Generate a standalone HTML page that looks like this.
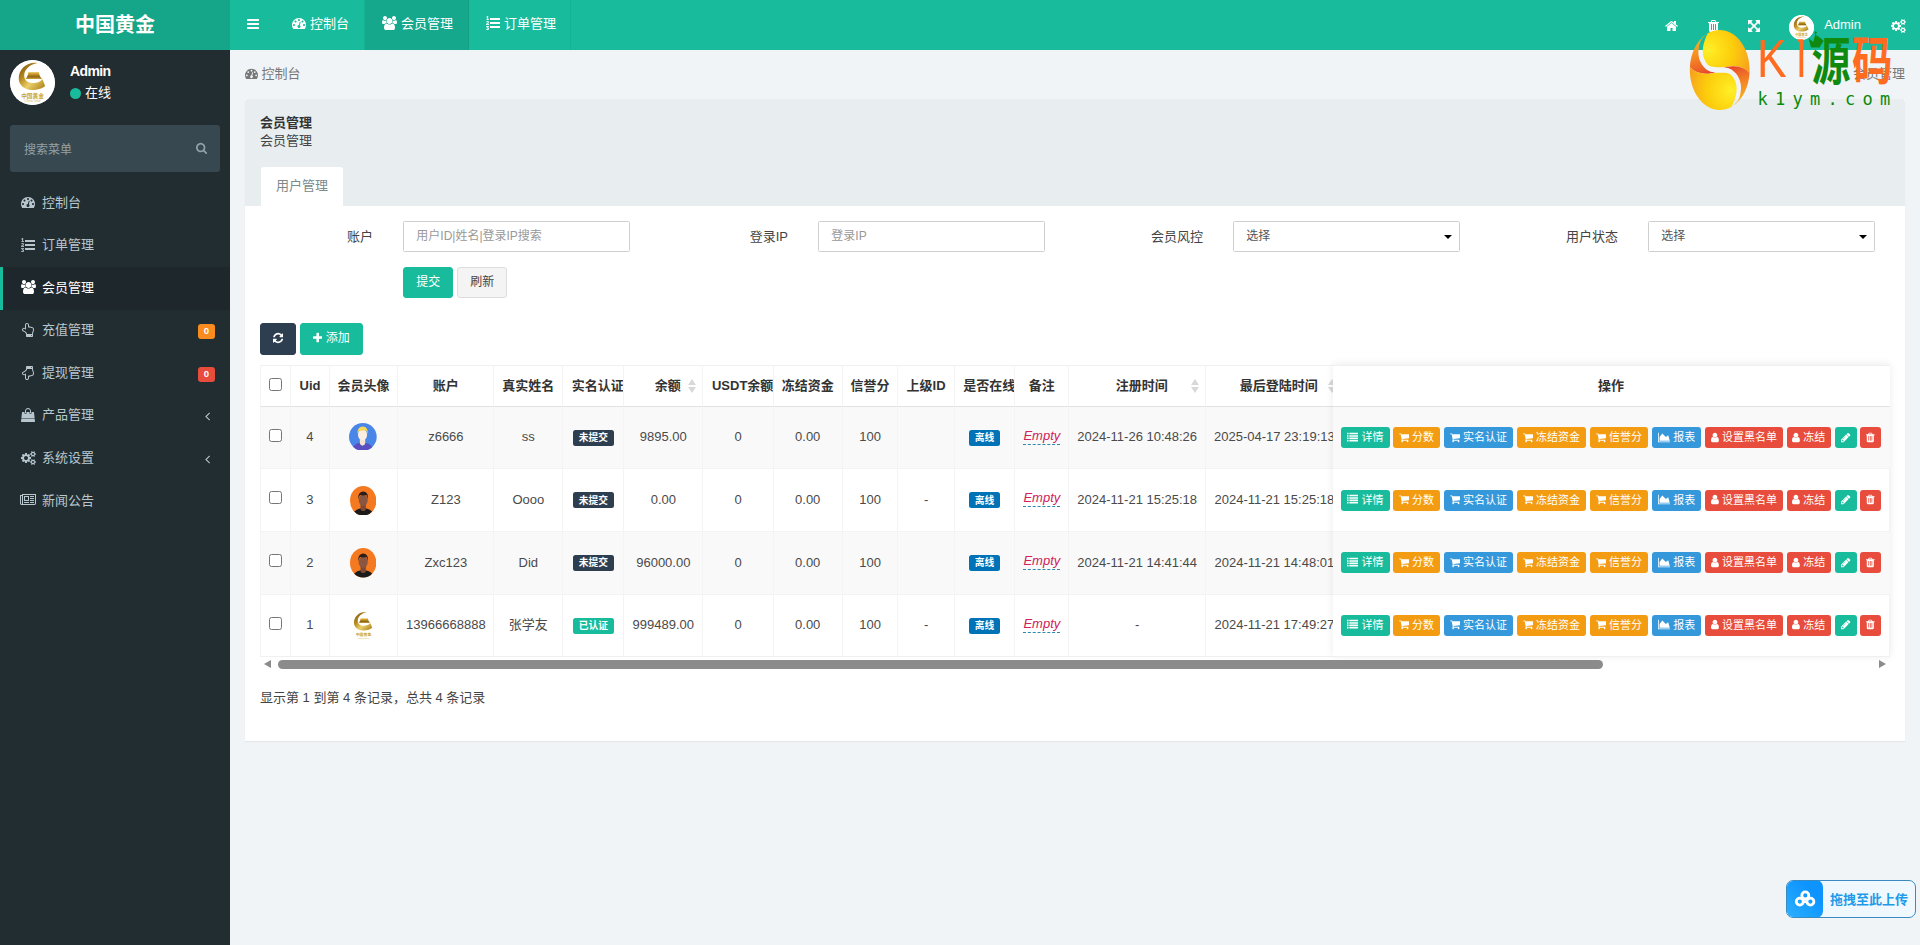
<!DOCTYPE html>
<html lang="zh-CN"><head><meta charset="utf-8"><title>中国黄金</title>
<style>
*{box-sizing:border-box}
html,body{margin:0;padding:0}
body{width:1920px;height:945px;overflow:hidden;background:#f1f4f6;font-family:"Liberation Sans","Noto Sans CJK SC",sans-serif;font-size:13px;line-height:1.42857;color:#444;position:relative}
svg.fa{display:inline-block;vertical-align:-2px}
a{text-decoration:none;color:inherit}
ul{list-style:none;margin:0;padding:0}
.main-header{position:absolute;left:0;top:0;width:1920px;height:50px;background:#18bc9c;z-index:5}
.logo{position:absolute;left:0;top:0;width:230px;height:50px;background:#15a589;color:#fff;font-size:20px;font-weight:bold;line-height:51.5px;text-align:center}
.navbar{position:absolute;left:230px;top:0;right:0;height:50px;color:#fff}
.sidebar-toggle{float:left;height:50px;padding:15px 15px 0 17px;width:45px;line-height:20px}
.nav-tabs{float:left}
.nav-tabs li{float:left;height:50px;padding:0 0 0 16.6px;line-height:48.2px;font-size:13px;border-right:1px solid rgba(0,0,0,.05);white-space:nowrap;overflow:hidden}
.nav-tabs li.active{background:rgba(0,0,0,.1)}
.nav-tabs li svg{margin-right:4.4px}
.custom{float:right}
.custom li{float:left;height:50px;padding:0 15px;line-height:53px}
.custom li.user{font-size:13px;line-height:50px}
.uimg{display:inline-block;width:25px;height:25px;border-radius:50%;background:#fff;vertical-align:middle;margin-right:10px;margin-top:3px;overflow:hidden}
.main-sidebar{position:absolute;left:0;top:50px;width:230px;height:895px;background:#222d32;color:#b8c7ce}
.user-panel{height:65px;padding:10px;position:relative}
.user-panel .img{position:absolute;left:10px;top:10px;width:45px;height:45px;border-radius:50%;background:#fff;overflow:hidden}
.user-panel .info{position:absolute;left:70px;top:10px;color:#fff}
.user-panel .info p{margin:0;font-weight:bold;font-size:14px;line-height:20px;margin-top:1px;letter-spacing:-.6px}
.user-panel .info span{font-size:13px;line-height:18px;display:block;margin-top:3px}
.user-panel .info i{display:inline-block;width:11px;height:11px;border-radius:50%;background:#18bc9c;margin-right:4px;vertical-align:-2px}
.sidebar-form{margin:10px 10px 0;height:46.6px;border-radius:3px;background:#374850;position:relative;color:#93a1a8;font-size:12px;line-height:50px;padding-left:14px}
.sidebar-form svg{position:absolute;right:13px;top:17px}
.sidebar-menu li{height:42.57px;border-left:3px solid transparent;padding:12px 5px 12px 15px;position:relative;font-size:13px;line-height:18.57px;white-space:nowrap}
.sidebar-menu li .tx{position:relative;top:-.7px}
.sidebar-menu li.active{background:#1e282c;border-left-color:#18bc9c;color:#fff}
.sidebar-menu li .ic{display:inline-block;width:20px;text-align:center;margin-right:4px}
.sidebar-menu .badge{position:absolute;right:15px;top:14px;height:15.2px;min-width:17px;padding:0 5px;border-radius:3px;color:#fff;font-size:9.5px;font-weight:bold;line-height:14px;text-align:center}
.sidebar-menu .chev{position:absolute;right:20px;top:13px}
.content{position:absolute;left:230px;top:50px;width:1690px;height:895px;padding:15px}
.bc{height:18.57px;line-height:17.6px;margin-bottom:15px;color:#777;position:relative}
.bc .r{position:absolute;right:0;top:0}
.panel{background:#fff;width:1660px;height:642.3px;box-shadow:0 1px 1px rgba(0,0,0,.05)}
.panel-heading{background:#e8edf0;height:107px;padding:15px;position:relative;border-radius:3px 3px 0 0}
.panel-heading b{display:block;color:#333}
.panel-heading span{display:block;color:#444}
.ptab{position:absolute;left:16px;bottom:0;height:38.57px;padding:10px 15px;background:#fff;color:#7b8a8b;border-radius:3px 3px 0 0}
.panel-body{position:relative;height:535.3px}

.abs{position:absolute}
.flabel{position:absolute;width:113px;text-align:right;font-size:13px;line-height:31px;height:31px;color:#444}
.finput{position:absolute;width:226.7px;height:31px;border:1px solid #cfcfcf;border-radius:1.5px;background:#fff;font-size:12px;line-height:29px;padding:0 12px;color:#999}
.fselect{color:#555}
.fselect i{position:absolute;right:7px;top:13px;width:0;height:0;border-left:4px solid transparent;border-right:4px solid transparent;border-top:4.5px solid #000}
.btn{position:absolute;height:31.4px;border:1px solid transparent;border-radius:3px;font-size:12px;line-height:17.8px;padding:6px 12px;color:#fff;white-space:nowrap}
.btn svg.fa{vertical-align:-1.5px}
.btn-success{background:#18bc9c;border-color:#18bc9c}
.btn-default{background:#f4f4f4;border-color:#ddd;color:#444}
.btn-primary{background:#2c3e50;border-color:#2c3e50}
table{border-collapse:separate;border-spacing:0;table-layout:fixed}
.tw{position:absolute;overflow:hidden}
.tw table{font-size:13px;color:#4a4a4a}
th,td{padding:0;text-align:center;vertical-align:middle;border-left:1px solid #f4f4f4;white-space:nowrap;overflow:hidden}
th{height:41.9px;border-top:1px solid #f0f0f0;border-bottom:1px solid #e2e2e2;color:#333;font-weight:bold;background:#fff;position:relative}
th.ov{text-align:left;padding-left:8.5px}
th.so{padding-left:9px}
td{height:62.63px;border-top:1px solid #f3f3f3}
tbody tr:first-child td{height:61.5px;border-top:0}
tr.odd td{background:#f9f9f9}
.cb{display:inline-block;width:13px;height:13px;border:1px solid #767676;border-radius:2.5px;background:#fff;position:relative;top:.5px}
th .cb{top:1.6px}
.sort{position:absolute;right:6.3px;top:12.6px;width:8px;height:14.5px}
.sort:before,.sort:after{content:"";position:absolute;left:0;border-left:4px solid transparent;border-right:4px solid transparent}
.sort:before{top:0;border-bottom:6.3px solid #d8d8d8}
.sort:after{bottom:0;border-top:6.3px solid #d8d8d8}
.label{display:inline-block;font-size:9.75px;font-weight:bold;color:#fff;line-height:1;padding:3.1px 5.85px 3.1px;border-radius:2.5px;position:relative;top:-.4px}
.l-pri{background:#2c3e50}.l-suc{background:#18bc9c}.l-blue{background:#0073b7}
.empty{font-style:italic;color:#d0215a;border-bottom:1px dashed #2a8aa8;display:inline-block;line-height:16px;position:relative;top:-1.5px}
.fixed{position:absolute;background:#fff;box-shadow:0 -1px 8px rgba(0,0,0,.08)}
.fixed td{text-align:left;padding-left:8px;font-size:0}
.xs{position:absolute;top:50%;margin-top:-10.5px;display:block;height:21px;border-radius:3px;font-size:11px;line-height:17.5px;padding:2px 0;color:#fff;white-space:nowrap;text-align:center}
.fixed td{position:relative}
.xs svg.fa{vertical-align:-1.5px;margin-right:3px}
.xs.io svg.fa{margin-right:0}
.b-g{background:#18bc9c}.b-o{background:#f39c12}.b-b{background:#3498db}.b-r{background:#e74c3c}
.av{display:inline-block;vertical-align:middle}
.sb{position:absolute}
.pinfo{position:absolute;font-size:13px;color:#444;line-height:18.57px}

.upl{position:absolute;left:1786px;top:880px;width:130px;height:38px;border:1px solid #3a8cc0;border-radius:7px;background:#eff8ff;z-index:9;overflow:hidden}
.upi{position:absolute;left:-1px;top:-1px;width:36.700px;height:38px;border-radius:7px;background:linear-gradient(45deg,#2db0ff,#0d94ff 70%)}
.upl span{position:absolute;left:43px;top:0;line-height:37.200px;font-size:13px;font-weight:bold;color:#1e9be8;white-space:nowrap}
</style></head><body>

<div class="main-header">
 <div class="logo">中国黄金</div>
 <div class="navbar">
  <div class="sidebar-toggle"><svg class="fa" width="12.00" height="14" viewBox="0 -1536 1536 1792"><path fill="#fff" transform="scale(1,-1)" d="M1536 192v-128q0 -26 -19 -45t-45 -19h-1408q-26 0 -45 19t-19 45v128q0 26 19 45t45 19h1408q26 0 45 -19t19 -45zM1536 704v-128q0 -26 -19 -45t-45 -19h-1408q-26 0 -45 19t-19 45v128q0 26 19 45t45 19h1408q26 0 45 -19t19 -45zM1536 1216v-128q0 -26 -19 -45
t-45 -19h-1408q-26 0 -45 19t-19 45v128q0 26 19 45t45 19h1408q26 0 45 -19t19 -45z"/></svg></div>
  <ul class="nav-tabs"><li class="" style="width:90px"><svg class="fa" width="14.00" height="14" viewBox="0 -1536 1792 1792"><path fill="#fff" transform="scale(1,-1)" d="M384 384q0 53 -37.5 90.5t-90.5 37.5t-90.5 -37.5t-37.5 -90.5t37.5 -90.5t90.5 -37.5t90.5 37.5t37.5 90.5zM576 832q0 53 -37.5 90.5t-90.5 37.5t-90.5 -37.5t-37.5 -90.5t37.5 -90.5t90.5 -37.5t90.5 37.5t37.5 90.5zM1004 351l101 382q6 26 -7.5 48.5t-38.5 29.5
t-48 -6.5t-30 -39.5l-101 -382q-60 -5 -107 -43.5t-63 -98.5q-20 -77 20 -146t117 -89t146 20t89 117q16 60 -6 117t-72 91zM1664 384q0 53 -37.5 90.5t-90.5 37.5t-90.5 -37.5t-37.5 -90.5t37.5 -90.5t90.5 -37.5t90.5 37.5t37.5 90.5zM1024 1024q0 53 -37.5 90.5
t-90.5 37.5t-90.5 -37.5t-37.5 -90.5t37.5 -90.5t90.5 -37.5t90.5 37.5t37.5 90.5zM1472 832q0 53 -37.5 90.5t-90.5 37.5t-90.5 -37.5t-37.5 -90.5t37.5 -90.5t90.5 -37.5t90.5 37.5t37.5 90.5zM1792 384q0 -261 -141 -483q-19 -29 -54 -29h-1402q-35 0 -54 29
q-141 221 -141 483q0 182 71 348t191 286t286 191t348 71t348 -71t286 -191t191 -286t71 -348z"/></svg>控制台</li><li class="active" style="width:104px"><svg class="fa" width="15.00" height="14" viewBox="0 -1536 1920 1792"><path fill="#fff" transform="scale(1,-1)" d="M593 640q-162 -5 -265 -128h-134q-82 0 -138 40.5t-56 118.5q0 353 124 353q6 0 43.5 -21t97.5 -42.5t119 -21.5q67 0 133 23q-5 -37 -5 -66q0 -139 81 -256zM1664 3q0 -120 -73 -189.5t-194 -69.5h-874q-121 0 -194 69.5t-73 189.5q0 53 3.5 103.5t14 109t26.5 108.5
t43 97.5t62 81t85.5 53.5t111.5 20q10 0 43 -21.5t73 -48t107 -48t135 -21.5t135 21.5t107 48t73 48t43 21.5q61 0 111.5 -20t85.5 -53.5t62 -81t43 -97.5t26.5 -108.5t14 -109t3.5 -103.5zM640 1280q0 -106 -75 -181t-181 -75t-181 75t-75 181t75 181t181 75t181 -75
t75 -181zM1344 896q0 -159 -112.5 -271.5t-271.5 -112.5t-271.5 112.5t-112.5 271.5t112.5 271.5t271.5 112.5t271.5 -112.5t112.5 -271.5zM1920 671q0 -78 -56 -118.5t-138 -40.5h-134q-103 123 -265 128q81 117 81 256q0 29 -5 66q66 -23 133 -23q59 0 119 21.5t97.5 42.5
t43.5 21q124 0 124 -353zM1792 1280q0 -106 -75 -181t-181 -75t-181 75t-75 181t75 181t181 75t181 -75t75 -181z"/></svg>会员管理</li><li class="" style="width:102.25px"><svg class="fa" width="14.00" height="14" viewBox="0 -1536 1792 1792"><path fill="#fff" transform="scale(1,-1)" d="M381 -84q0 -80 -54.5 -126t-135.5 -46q-106 0 -172 66l57 88q49 -45 106 -45q29 0 50.5 14.5t21.5 42.5q0 64 -105 56l-26 56q8 10 32.5 43.5t42.5 54t37 38.5v1q-16 0 -48.5 -1t-48.5 -1v-53h-106v152h333v-88l-95 -115q51 -12 81 -49t30 -88zM383 543v-159h-362
q-6 36 -6 54q0 51 23.5 93t56.5 68t66 47.5t56.5 43.5t23.5 45q0 25 -14.5 38.5t-39.5 13.5q-46 0 -81 -58l-85 59q24 51 71.5 79.5t105.5 28.5q73 0 123 -41.5t50 -112.5q0 -50 -34 -91.5t-75 -64.5t-75.5 -50.5t-35.5 -52.5h127v60h105zM1792 224v-192q0 -13 -9.5 -22.5
t-22.5 -9.5h-1216q-13 0 -22.5 9.5t-9.5 22.5v192q0 14 9 23t23 9h1216q13 0 22.5 -9.5t9.5 -22.5zM384 1123v-99h-335v99h107q0 41 0.5 121.5t0.5 121.5v12h-2q-8 -17 -50 -54l-71 76l136 127h106v-404h108zM1792 736v-192q0 -13 -9.5 -22.5t-22.5 -9.5h-1216
q-13 0 -22.5 9.5t-9.5 22.5v192q0 14 9 23t23 9h1216q13 0 22.5 -9.5t9.5 -22.5zM1792 1248v-192q0 -13 -9.5 -22.5t-22.5 -9.5h-1216q-13 0 -22.5 9.5t-9.5 22.5v192q0 13 9.5 22.5t22.5 9.5h1216q13 0 22.5 -9.5t9.5 -22.5z"/></svg>订单管理</li></ul>
  <ul class="custom">
   <li><svg class="fa" width="13.00" height="14" viewBox="0 -1536 1664 1792"><path fill="#fff" transform="scale(1,-1)" d="M1408 544v-480q0 -26 -19 -45t-45 -19h-384v384h-256v-384h-384q-26 0 -45 19t-19 45v480q0 1 0.5 3t0.5 3l575 474l575 -474q1 -2 1 -6zM1631 613l-62 -74q-8 -9 -21 -11h-3q-13 0 -21 7l-692 577l-692 -577q-12 -8 -24 -7q-13 2 -21 11l-62 74q-8 10 -7 23.5t11 21.5
l719 599q32 26 76 26t76 -26l244 -204v195q0 14 9 23t23 9h192q14 0 23 -9t9 -23v-408l219 -182q10 -8 11 -21.5t-7 -23.5z"/></svg></li><li style="padding-right:14px"><svg class="fa" width="11.00" height="14" viewBox="0 -1536 1408 1792"><path fill="#fff" transform="scale(1,-1)" d="M512 160v704q0 14 -9 23t-23 9h-64q-14 0 -23 -9t-9 -23v-704q0 -14 9 -23t23 -9h64q14 0 23 9t9 23zM768 160v704q0 14 -9 23t-23 9h-64q-14 0 -23 -9t-9 -23v-704q0 -14 9 -23t23 -9h64q14 0 23 9t9 23zM1024 160v704q0 14 -9 23t-23 9h-64q-14 0 -23 -9t-9 -23v-704
q0 -14 9 -23t23 -9h64q14 0 23 9t9 23zM480 1152h448l-48 117q-7 9 -17 11h-317q-10 -2 -17 -11zM1408 1120v-64q0 -14 -9 -23t-23 -9h-96v-948q0 -83 -47 -143.5t-113 -60.5h-832q-66 0 -113 58.5t-47 141.5v952h-96q-14 0 -23 9t-9 23v64q0 14 9 23t23 9h309l70 167
q15 37 54 63t79 26h320q40 0 79 -26t54 -63l70 -167h309q14 0 23 -9t9 -23z"/></svg></li><li style="padding-right:14px"><svg class="fa" width="12.00" height="14" viewBox="0 -1536 1536 1792"><path fill="#fff" transform="scale(1,-1)" d="M1283 995l-355 -355l355 -355l144 144q29 31 70 14q39 -17 39 -59v-448q0 -26 -19 -45t-45 -19h-448q-42 0 -59 40q-17 39 14 69l144 144l-355 355l-355 -355l144 -144q31 -30 14 -69q-17 -40 -59 -40h-448q-26 0 -45 19t-19 45v448q0 42 40 59q39 17 69 -14l144 -144
l355 355l-355 355l-144 -144q-19 -19 -45 -19q-12 0 -24 5q-40 17 -40 59v448q0 26 19 45t45 19h448q42 0 59 -40q17 -39 -14 -69l-144 -144l355 -355l355 355l-144 144q-31 30 -14 69q17 40 59 40h448q26 0 45 -19t19 -45v-448q0 -42 -39 -59q-13 -5 -25 -5q-26 0 -45 19z
"/></svg></li>
   <li class="user"><span class="uimg"><svg class="lg" width="25" height="25" viewBox="0 0 45 45" style="display:block">
<defs><linearGradient id="gha" x1="0" y1="0" x2="1" y2="1"><stop offset="0" stop-color="#6e4c12"/><stop offset=".35" stop-color="#b98a1e"/><stop offset=".6" stop-color="#e9cf6a"/><stop offset="1" stop-color="#a87812"/></linearGradient>
<linearGradient id="ghb" x1="0" y1="0" x2="0" y2="1"><stop offset="0" stop-color="#f0d676"/><stop offset=".3" stop-color="#c99a2a"/><stop offset=".7" stop-color="#8f6614"/><stop offset="1" stop-color="#caa23a"/></linearGradient></defs>
<circle cx="22.5" cy="22.5" r="22.5" fill="#fff"/><path d="M27.6 2.9C17 1.500 8.700 9 8.700 18.300c0 7.200 5.800 11.600 13.100 11.600 6.200 0 11.200-1.900 13.400-4l-2.900-7c-1.300 2.600-5.300 4-9.800 4-5 0-8.300-2.900-8.300-7.400 0-6 5.300-11 13.400-12.600z" fill="url(#gha)"/>
<path d="M18.300 11.900h10.500c.5 3.100 1.700 5.600 3.500 7H15.400c1.600-1.400 2.600-3.900 2.900-7z" fill="url(#ghb)"/>
<text x="22.500" y="37.800" text-anchor="middle" font-family="'Liberation Sans','Noto Sans CJK SC',sans-serif" font-weight="bold" font-size="5.700" fill="#c9a42c">中国黄金</text>
<text x="22.500" y="41.900" text-anchor="middle" font-family="'Liberation Sans',sans-serif" font-size="3.200" fill="#d6b95a">China Gold</text></svg></span>Admin</li>
   <li style="padding-right:14px"><svg class="fa" width="15.00" height="14" viewBox="0 -1536 1920 1792"><path fill="#fff" transform="scale(1,-1)" d="M896 640q0 106 -75 181t-181 75t-181 -75t-75 -181t75 -181t181 -75t181 75t75 181zM1664 128q0 52 -38 90t-90 38t-90 -38t-38 -90q0 -53 37.5 -90.5t90.5 -37.5t90.5 37.5t37.5 90.5zM1664 1152q0 52 -38 90t-90 38t-90 -38t-38 -90q0 -53 37.5 -90.5t90.5 -37.5
t90.5 37.5t37.5 90.5zM1280 731v-185q0 -10 -7 -19.5t-16 -10.5l-155 -24q-11 -35 -32 -76q34 -48 90 -115q7 -11 7 -20q0 -12 -7 -19q-23 -30 -82.5 -89.5t-78.5 -59.5q-11 0 -21 7l-115 90q-37 -19 -77 -31q-11 -108 -23 -155q-7 -24 -30 -24h-186q-11 0 -20 7.5t-10 17.5
l-23 153q-34 10 -75 31l-118 -89q-7 -7 -20 -7q-11 0 -21 8q-144 133 -144 160q0 9 7 19q10 14 41 53t47 61q-23 44 -35 82l-152 24q-10 1 -17 9.5t-7 19.5v185q0 10 7 19.5t16 10.5l155 24q11 35 32 76q-34 48 -90 115q-7 11 -7 20q0 12 7 20q22 30 82 89t79 59q11 0 21 -7
l115 -90q34 18 77 32q11 108 23 154q7 24 30 24h186q11 0 20 -7.5t10 -17.5l23 -153q34 -10 75 -31l118 89q8 7 20 7q11 0 21 -8q144 -133 144 -160q0 -8 -7 -19q-12 -16 -42 -54t-45 -60q23 -48 34 -82l152 -23q10 -2 17 -10.5t7 -19.5zM1920 198v-140q0 -16 -149 -31
q-12 -27 -30 -52q51 -113 51 -138q0 -4 -4 -7q-122 -71 -124 -71q-8 0 -46 47t-52 68q-20 -2 -30 -2t-30 2q-14 -21 -52 -68t-46 -47q-2 0 -124 71q-4 3 -4 7q0 25 51 138q-18 25 -30 52q-149 15 -149 31v140q0 16 149 31q13 29 30 52q-51 113 -51 138q0 4 4 7q4 2 35 20
t59 34t30 16q8 0 46 -46.5t52 -67.5q20 2 30 2t30 -2q51 71 92 112l6 2q4 0 124 -70q4 -3 4 -7q0 -25 -51 -138q17 -23 30 -52q149 -15 149 -31zM1920 1222v-140q0 -16 -149 -31q-12 -27 -30 -52q51 -113 51 -138q0 -4 -4 -7q-122 -71 -124 -71q-8 0 -46 47t-52 68
q-20 -2 -30 -2t-30 2q-14 -21 -52 -68t-46 -47q-2 0 -124 71q-4 3 -4 7q0 25 51 138q-18 25 -30 52q-149 15 -149 31v140q0 16 149 31q13 29 30 52q-51 113 -51 138q0 4 4 7q4 2 35 20t59 34t30 16q8 0 46 -46.5t52 -67.5q20 2 30 2t30 -2q51 71 92 112l6 2q4 0 124 -70
q4 -3 4 -7q0 -25 -51 -138q17 -23 30 -52q149 -15 149 -31z"/></svg></li>
  </ul>
 </div>
</div>

<div class="main-sidebar">
 <div class="user-panel"><div class="img"><svg class="lg" width="45" height="45" viewBox="0 0 45 45" style="display:block">
<defs><linearGradient id="gsa" x1="0" y1="0" x2="1" y2="1"><stop offset="0" stop-color="#6e4c12"/><stop offset=".35" stop-color="#b98a1e"/><stop offset=".6" stop-color="#e9cf6a"/><stop offset="1" stop-color="#a87812"/></linearGradient>
<linearGradient id="gsb" x1="0" y1="0" x2="0" y2="1"><stop offset="0" stop-color="#f0d676"/><stop offset=".3" stop-color="#c99a2a"/><stop offset=".7" stop-color="#8f6614"/><stop offset="1" stop-color="#caa23a"/></linearGradient></defs>
<circle cx="22.5" cy="22.5" r="22.5" fill="#fff"/><path d="M27.6 2.9C17 1.500 8.700 9 8.700 18.300c0 7.200 5.800 11.600 13.100 11.600 6.200 0 11.200-1.900 13.400-4l-2.900-7c-1.300 2.600-5.300 4-9.800 4-5 0-8.300-2.900-8.300-7.400 0-6 5.300-11 13.400-12.600z" fill="url(#gsa)"/>
<path d="M18.300 11.900h10.500c.5 3.100 1.700 5.600 3.500 7H15.400c1.600-1.400 2.600-3.900 2.900-7z" fill="url(#gsb)"/>
<text x="22.500" y="37.800" text-anchor="middle" font-family="'Liberation Sans','Noto Sans CJK SC',sans-serif" font-weight="bold" font-size="5.700" fill="#c9a42c">中国黄金</text>
<text x="22.500" y="41.900" text-anchor="middle" font-family="'Liberation Sans',sans-serif" font-size="3.200" fill="#d6b95a">China Gold</text></svg></div><div class="info"><p>Admin</p><span><i></i>在线</span></div></div>
 <div class="sidebar-form">搜索菜单<svg class="fa" width="11.14" height="12" viewBox="0 -1536 1664 1792"><path fill="#93a1a8" transform="scale(1,-1)" d="M1152 704q0 185 -131.5 316.5t-316.5 131.5t-316.5 -131.5t-131.5 -316.5t131.5 -316.5t316.5 -131.5t316.5 131.5t131.5 316.5zM1664 -128q0 -52 -38 -90t-90 -38q-54 0 -90 38l-343 342q-179 -124 -399 -124q-143 0 -273.5 55.5t-225 150t-150 225t-55.5 273.5
t55.5 273.5t150 225t225 150t273.5 55.5t273.5 -55.5t225 -150t150 -225t55.5 -273.5q0 -220 -124 -399l343 -343q37 -37 37 -90z"/></svg></div>
 <ul class="sidebar-menu" style="margin-top:10.7px">
 <li class=""><span class="ic"><svg class="fa" width="14.00" height="14" viewBox="0 -1536 1792 1792"><path fill="#b8c7ce" transform="scale(1,-1)" d="M384 384q0 53 -37.5 90.5t-90.5 37.5t-90.5 -37.5t-37.5 -90.5t37.5 -90.5t90.5 -37.5t90.5 37.5t37.5 90.5zM576 832q0 53 -37.5 90.5t-90.5 37.5t-90.5 -37.5t-37.5 -90.5t37.5 -90.5t90.5 -37.5t90.5 37.5t37.5 90.5zM1004 351l101 382q6 26 -7.5 48.5t-38.5 29.5
t-48 -6.5t-30 -39.5l-101 -382q-60 -5 -107 -43.5t-63 -98.5q-20 -77 20 -146t117 -89t146 20t89 117q16 60 -6 117t-72 91zM1664 384q0 53 -37.5 90.5t-90.5 37.5t-90.5 -37.5t-37.5 -90.5t37.5 -90.5t90.5 -37.5t90.5 37.5t37.5 90.5zM1024 1024q0 53 -37.5 90.5
t-90.5 37.5t-90.5 -37.5t-37.5 -90.5t37.5 -90.5t90.5 -37.5t90.5 37.5t37.5 90.5zM1472 832q0 53 -37.5 90.5t-90.5 37.5t-90.5 -37.5t-37.5 -90.5t37.5 -90.5t90.5 -37.5t90.5 37.5t37.5 90.5zM1792 384q0 -261 -141 -483q-19 -29 -54 -29h-1402q-35 0 -54 29
q-141 221 -141 483q0 182 71 348t191 286t286 191t348 71t348 -71t286 -191t191 -286t71 -348z"/></svg></span><span class="tx">控制台</span></li>
 <li class=""><span class="ic"><svg class="fa" width="14.00" height="14" viewBox="0 -1536 1792 1792"><path fill="#b8c7ce" transform="scale(1,-1)" d="M381 -84q0 -80 -54.5 -126t-135.5 -46q-106 0 -172 66l57 88q49 -45 106 -45q29 0 50.5 14.5t21.5 42.5q0 64 -105 56l-26 56q8 10 32.5 43.5t42.5 54t37 38.5v1q-16 0 -48.5 -1t-48.5 -1v-53h-106v152h333v-88l-95 -115q51 -12 81 -49t30 -88zM383 543v-159h-362
q-6 36 -6 54q0 51 23.5 93t56.5 68t66 47.5t56.5 43.5t23.5 45q0 25 -14.5 38.5t-39.5 13.5q-46 0 -81 -58l-85 59q24 51 71.5 79.5t105.5 28.5q73 0 123 -41.5t50 -112.5q0 -50 -34 -91.5t-75 -64.5t-75.5 -50.5t-35.5 -52.5h127v60h105zM1792 224v-192q0 -13 -9.5 -22.5
t-22.5 -9.5h-1216q-13 0 -22.5 9.5t-9.5 22.5v192q0 14 9 23t23 9h1216q13 0 22.5 -9.5t9.5 -22.5zM384 1123v-99h-335v99h107q0 41 0.5 121.5t0.5 121.5v12h-2q-8 -17 -50 -54l-71 76l136 127h106v-404h108zM1792 736v-192q0 -13 -9.5 -22.5t-22.5 -9.5h-1216
q-13 0 -22.5 9.5t-9.5 22.5v192q0 14 9 23t23 9h1216q13 0 22.5 -9.5t9.5 -22.5zM1792 1248v-192q0 -13 -9.5 -22.5t-22.5 -9.5h-1216q-13 0 -22.5 9.5t-9.5 22.5v192q0 13 9.5 22.5t22.5 9.5h1216q13 0 22.5 -9.5t9.5 -22.5z"/></svg></span><span class="tx">订单管理</span></li>
 <li class="active"><span class="ic"><svg class="fa" width="15.00" height="14" viewBox="0 -1536 1920 1792"><path fill="#fff" transform="scale(1,-1)" d="M593 640q-162 -5 -265 -128h-134q-82 0 -138 40.5t-56 118.5q0 353 124 353q6 0 43.5 -21t97.5 -42.5t119 -21.5q67 0 133 23q-5 -37 -5 -66q0 -139 81 -256zM1664 3q0 -120 -73 -189.5t-194 -69.5h-874q-121 0 -194 69.5t-73 189.5q0 53 3.5 103.5t14 109t26.5 108.5
t43 97.5t62 81t85.5 53.5t111.5 20q10 0 43 -21.5t73 -48t107 -48t135 -21.5t135 21.5t107 48t73 48t43 21.5q61 0 111.5 -20t85.5 -53.5t62 -81t43 -97.5t26.5 -108.5t14 -109t3.5 -103.5zM640 1280q0 -106 -75 -181t-181 -75t-181 75t-75 181t75 181t181 75t181 -75
t75 -181zM1344 896q0 -159 -112.5 -271.5t-271.5 -112.5t-271.5 112.5t-112.5 271.5t112.5 271.5t271.5 112.5t271.5 -112.5t112.5 -271.5zM1920 671q0 -78 -56 -118.5t-138 -40.5h-134q-103 123 -265 128q81 117 81 256q0 29 -5 66q66 -23 133 -23q59 0 119 21.5t97.5 42.5
t43.5 21q124 0 124 -353zM1792 1280q0 -106 -75 -181t-181 -75t-181 75t-75 181t75 181t181 75t181 -75t75 -181z"/></svg></span><span class="tx">会员管理</span></li>
 <li class=""><span class="ic"><svg class="fa" width="12.00" height="14" viewBox="0 -1536 1536 1792"><path fill="#b8c7ce" transform="scale(1,-1)" d="M1280 -64q0 26 -19 45t-45 19t-45 -19t-19 -45t19 -45t45 -19t45 19t19 45zM1408 700q0 189 -167 189q-26 0 -56 -5q-16 30 -52.5 47.5t-73.5 17.5t-69 -18q-50 53 -119 53q-25 0 -55.5 -10t-47.5 -25v331q0 52 -38 90t-90 38q-51 0 -89.5 -39t-38.5 -89v-576
q-20 0 -48.5 15t-55 33t-68 33t-84.5 15q-67 0 -97.5 -44.5t-30.5 -115.5q0 -24 139 -90q44 -24 65 -37q64 -40 145 -112q81 -71 106 -101q57 -69 57 -140v-32h640v32q0 72 32 167t64 193.5t32 179.5zM1536 705q0 -133 -69 -322q-59 -164 -59 -223v-288q0 -53 -37.5 -90.5
t-90.5 -37.5h-640q-53 0 -90.5 37.5t-37.5 90.5v288q0 10 -4.5 21.5t-14 23.5t-18 22.5t-22.5 24t-21.5 20.5t-21.5 19t-17 14q-74 65 -129 100q-21 13 -62 33t-72 37t-63 40.5t-49.5 55t-17.5 69.5q0 125 67 206.5t189 81.5q68 0 128 -22v374q0 104 76 180t179 76
q105 0 181 -75.5t76 -180.5v-169q62 -4 119 -37q21 3 43 3q101 0 178 -60q139 1 219.5 -85t80.5 -227z"/></svg></span><span class="tx">充值管理</span><span class="badge" style="background:#fa8b1e">0</span></li>
 <li class=""><span class="ic"><svg class="fa" width="12.00" height="14" viewBox="0 -1536 1536 1792"><path fill="#b8c7ce" transform="scale(1,-1)" d="M1408 576q0 84 -32 183t-64 194t-32 167v32h-640v-32q0 -35 -12 -67.5t-37 -62.5t-46 -50t-54 -49q-9 -8 -14 -12q-81 -72 -145 -112q-22 -14 -68 -38q-3 -1 -22.5 -10.5t-36 -18.5t-35.5 -20t-30.5 -21.5t-11.5 -18.5q0 -71 30.5 -115.5t97.5 -44.5q43 0 84.5 15t68 33
t55 33t48.5 15v-576q0 -50 38.5 -89t89.5 -39q52 0 90 38t38 90v331q46 -35 103 -35q69 0 119 53q32 -18 69 -18t73.5 17.5t52.5 47.5q24 -4 56 -4q85 0 126 48.5t41 135.5zM1280 1344q0 26 -19 45t-45 19t-45 -19t-19 -45t19 -45t45 -19t45 19t19 45zM1536 580
q0 -142 -77.5 -230t-217.5 -87l-5 1q-76 -61 -178 -61q-22 0 -43 3q-54 -30 -119 -37v-169q0 -105 -76 -180.5t-181 -75.5q-103 0 -179 76t-76 180v374q-54 -22 -128 -22q-121 0 -188.5 81.5t-67.5 206.5q0 38 17.5 69.5t49.5 55t63 40.5t72 37t62 33q55 35 129 100
q3 2 17 14t21.5 19t21.5 20.5t22.5 24t18 22.5t14 23.5t4.5 21.5v288q0 53 37.5 90.5t90.5 37.5h640q53 0 90.5 -37.5t37.5 -90.5v-288q0 -59 59 -223q69 -190 69 -317z"/></svg></span><span class="tx">提现管理</span><span class="badge" style="background:#e74c3c">0</span></li>
 <li class=""><span class="ic"><svg class="fa" width="14.00" height="14" viewBox="0 -1536 1792 1792"><path fill="#b8c7ce" transform="scale(1,-1)" d="M1757 128l35 -313q3 -28 -16 -50q-19 -21 -48 -21h-1664q-29 0 -48 21q-19 22 -16 50l35 313h1722zM1664 967l86 -775h-1708l86 775q3 24 21 40.5t43 16.5h256v-128q0 -53 37.5 -90.5t90.5 -37.5t90.5 37.5t37.5 90.5v128h384v-128q0 -53 37.5 -90.5t90.5 -37.5
t90.5 37.5t37.5 90.5v128h256q25 0 43 -16.5t21 -40.5zM1280 1152v-256q0 -26 -19 -45t-45 -19t-45 19t-19 45v256q0 106 -75 181t-181 75t-181 -75t-75 -181v-256q0 -26 -19 -45t-45 -19t-45 19t-19 45v256q0 159 112.5 271.5t271.5 112.5t271.5 -112.5t112.5 -271.5z"/></svg></span><span class="tx">产品管理</span><span class="chev"><svg class="fa" width="5.00" height="14" viewBox="0 -1536 640 1792"><path fill="#b8c7ce" transform="scale(1,-1)" d="M627 992q0 -13 -10 -23l-393 -393l393 -393q10 -10 10 -23t-10 -23l-50 -50q-10 -10 -23 -10t-23 10l-466 466q-10 10 -10 23t10 23l466 466q10 10 23 10t23 -10l50 -50q10 -10 10 -23z"/></svg></span></li>
 <li class=""><span class="ic"><svg class="fa" width="15.00" height="14" viewBox="0 -1536 1920 1792"><path fill="#b8c7ce" transform="scale(1,-1)" d="M896 640q0 106 -75 181t-181 75t-181 -75t-75 -181t75 -181t181 -75t181 75t75 181zM1664 128q0 52 -38 90t-90 38t-90 -38t-38 -90q0 -53 37.5 -90.5t90.5 -37.5t90.5 37.5t37.5 90.5zM1664 1152q0 52 -38 90t-90 38t-90 -38t-38 -90q0 -53 37.5 -90.5t90.5 -37.5
t90.5 37.5t37.5 90.5zM1280 731v-185q0 -10 -7 -19.5t-16 -10.5l-155 -24q-11 -35 -32 -76q34 -48 90 -115q7 -11 7 -20q0 -12 -7 -19q-23 -30 -82.5 -89.5t-78.5 -59.5q-11 0 -21 7l-115 90q-37 -19 -77 -31q-11 -108 -23 -155q-7 -24 -30 -24h-186q-11 0 -20 7.5t-10 17.5
l-23 153q-34 10 -75 31l-118 -89q-7 -7 -20 -7q-11 0 -21 8q-144 133 -144 160q0 9 7 19q10 14 41 53t47 61q-23 44 -35 82l-152 24q-10 1 -17 9.5t-7 19.5v185q0 10 7 19.5t16 10.5l155 24q11 35 32 76q-34 48 -90 115q-7 11 -7 20q0 12 7 20q22 30 82 89t79 59q11 0 21 -7
l115 -90q34 18 77 32q11 108 23 154q7 24 30 24h186q11 0 20 -7.5t10 -17.5l23 -153q34 -10 75 -31l118 89q8 7 20 7q11 0 21 -8q144 -133 144 -160q0 -8 -7 -19q-12 -16 -42 -54t-45 -60q23 -48 34 -82l152 -23q10 -2 17 -10.5t7 -19.5zM1920 198v-140q0 -16 -149 -31
q-12 -27 -30 -52q51 -113 51 -138q0 -4 -4 -7q-122 -71 -124 -71q-8 0 -46 47t-52 68q-20 -2 -30 -2t-30 2q-14 -21 -52 -68t-46 -47q-2 0 -124 71q-4 3 -4 7q0 25 51 138q-18 25 -30 52q-149 15 -149 31v140q0 16 149 31q13 29 30 52q-51 113 -51 138q0 4 4 7q4 2 35 20
t59 34t30 16q8 0 46 -46.5t52 -67.5q20 2 30 2t30 -2q51 71 92 112l6 2q4 0 124 -70q4 -3 4 -7q0 -25 -51 -138q17 -23 30 -52q149 -15 149 -31zM1920 1222v-140q0 -16 -149 -31q-12 -27 -30 -52q51 -113 51 -138q0 -4 -4 -7q-122 -71 -124 -71q-8 0 -46 47t-52 68
q-20 -2 -30 -2t-30 2q-14 -21 -52 -68t-46 -47q-2 0 -124 71q-4 3 -4 7q0 25 51 138q-18 25 -30 52q-149 15 -149 31v140q0 16 149 31q13 29 30 52q-51 113 -51 138q0 4 4 7q4 2 35 20t59 34t30 16q8 0 46 -46.5t52 -67.5q20 2 30 2t30 -2q51 71 92 112l6 2q4 0 124 -70
q4 -3 4 -7q0 -25 -51 -138q17 -23 30 -52q149 -15 149 -31z"/></svg></span><span class="tx">系统设置</span><span class="chev"><svg class="fa" width="5.00" height="14" viewBox="0 -1536 640 1792"><path fill="#b8c7ce" transform="scale(1,-1)" d="M627 992q0 -13 -10 -23l-393 -393l393 -393q10 -10 10 -23t-10 -23l-50 -50q-10 -10 -23 -10t-23 10l-466 466q-10 10 -10 23t10 23l466 466q10 10 23 10t23 -10l50 -50q10 -10 10 -23z"/></svg></span></li>
 <li class=""><span class="ic"><svg class="fa" width="16.00" height="14" viewBox="0 -1536 2048 1792"><path fill="#b8c7ce" transform="scale(1,-1)" d="M1024 1024h-384v-384h384v384zM1152 384v-128h-640v128h640zM1152 1152v-640h-640v640h640zM1792 384v-128h-512v128h512zM1792 640v-128h-512v128h512zM1792 896v-128h-512v128h512zM1792 1152v-128h-512v128h512zM256 192v960h-128v-960q0 -26 19 -45t45 -19t45 19
t19 45zM1920 192v1088h-1536v-1088q0 -33 -11 -64h1483q26 0 45 19t19 45zM2048 1408v-1216q0 -80 -56 -136t-136 -56h-1664q-80 0 -136 56t-56 136v1088h256v128h1792z"/></svg></span><span class="tx">新闻公告</span></li>
 </ul>
</div>

<div class="content">
 <div class="bc"><svg class="fa" width="13.00" height="13" viewBox="0 -1536 1792 1792"><path fill="#777" transform="scale(1,-1)" d="M384 384q0 53 -37.5 90.5t-90.5 37.5t-90.5 -37.5t-37.5 -90.5t37.5 -90.5t90.5 -37.5t90.5 37.5t37.5 90.5zM576 832q0 53 -37.5 90.5t-90.5 37.5t-90.5 -37.5t-37.5 -90.5t37.5 -90.5t90.5 -37.5t90.5 37.5t37.5 90.5zM1004 351l101 382q6 26 -7.5 48.5t-38.5 29.5
t-48 -6.5t-30 -39.5l-101 -382q-60 -5 -107 -43.5t-63 -98.5q-20 -77 20 -146t117 -89t146 20t89 117q16 60 -6 117t-72 91zM1664 384q0 53 -37.5 90.5t-90.5 37.5t-90.5 -37.5t-37.5 -90.5t37.5 -90.5t90.5 -37.5t90.5 37.5t37.5 90.5zM1024 1024q0 53 -37.5 90.5
t-90.5 37.5t-90.5 -37.5t-37.5 -90.5t37.5 -90.5t90.5 -37.5t90.5 37.5t37.5 90.5zM1472 832q0 53 -37.5 90.5t-90.5 37.5t-90.5 -37.5t-37.5 -90.5t37.5 -90.5t90.5 -37.5t90.5 37.5t37.5 90.5zM1792 384q0 -261 -141 -483q-19 -29 -54 -29h-1402q-35 0 -54 29
q-141 221 -141 483q0 182 71 348t191 286t286 191t348 71t348 -71t286 -191t191 -286t71 -348z"/></svg> 控制台<span class="r">会员管理</span></div>
 <div class="panel">
  <div class="panel-heading"><b>会员管理</b><span>会员管理</span><div class="ptab">用户管理</div></div>
  <div class="panel-body"><label class="flabel" style="left:15.00px;top:15.00px">账户</label><div class="finput" style="left:158.30px;top:15.00px">用户ID|姓名|登录IP搜索</div><label class="flabel" style="left:430.00px;top:15.00px">登录IP</label><div class="finput" style="left:573.30px;top:15.00px">登录IP</div><label class="flabel" style="left:845.00px;top:15.00px">会员风控</label><div class="finput fselect" style="left:988.30px;top:15.00px">选择<i></i></div><label class="flabel" style="left:1260.00px;top:15.00px">用户状态</label><div class="finput fselect" style="left:1403.30px;top:15.00px">选择<i></i></div><div class="btn btn-success" style="left:158.30px;top:61.13px">提交</div><div class="btn btn-default" style="left:212.30px;top:61.13px">刷新</div><div class="btn btn-primary" style="left:15.25px;top:117.63px;padding-left:11.6px;padding-right:11.6px"><svg class="fa" width="10.29" height="12" viewBox="0 -1536 1536 1792"><path fill="#fff" transform="scale(1,-1)" d="M1511 480q0 -5 -1 -7q-64 -268 -268 -434.5t-478 -166.5q-146 0 -282.5 55t-243.5 157l-129 -129q-19 -19 -45 -19t-45 19t-19 45v448q0 26 19 45t45 19h448q26 0 45 -19t19 -45t-19 -45l-137 -137q71 -66 161 -102t187 -36q134 0 250 65t186 179q11 17 53 117
q8 23 30 23h192q13 0 22.5 -9.5t9.5 -22.5zM1536 1280v-448q0 -26 -19 -45t-45 -19h-448q-26 0 -45 19t-19 45t19 45l138 138q-148 137 -349 137q-134 0 -250 -65t-186 -179q-11 -17 -53 -117q-8 -23 -30 -23h-199q-13 0 -22.5 9.5t-9.5 22.5v7q65 268 270 434.5t480 166.5
q146 0 284 -55.5t245 -156.5l130 129q19 19 45 19t45 -19t19 -45z"/></svg></div><div class="btn btn-success" style="left:55.00px;top:117.63px"><svg class="fa" width="9.43" height="12" viewBox="0 -1536 1408 1792"><path fill="#fff" transform="scale(1,-1)" d="M1408 800v-192q0 -40 -28 -68t-68 -28h-416v-416q0 -40 -28 -68t-68 -28h-192q-40 0 -68 28t-28 68v416h-416q-40 0 -68 28t-28 68v192q0 40 28 68t68 28h416v416q0 40 28 68t68 28h192q40 0 68 -28t28 -68v-416h416q40 0 68 -28t28 -68z"/></svg> 添加</div><div class="tw" style="left:15.25px;top:159.43px;width:1072.25px;height:292.3px;border-bottom:1px solid #f0f0f0"><table style="width:1082.25px"><colgroup><col style="width:30.15px"><col style="width:38.20px"><col style="width:68.90px"><col style="width:95.80px"><col style="width:69.10px"><col style="width:60.85px"><col style="width:79.25px"><col style="width:70.25px"><col style="width:69.00px"><col style="width:55.75px"><col style="width:56.25px"><col style="width:60.75px"><col style="width:53.75px"><col style="width:137.00px"><col style="width:137.25px"></colgroup><thead><tr><th><span class="cb"></span></th><th>Uid</th><th>会员头像</th><th>账户</th><th>真实姓名</th><th class="ov">实名认证</th><th class="so">余额<span class="sort"></span></th><th class="ov">USDT余额</th><th>冻结资金</th><th>信誉分</th><th>上级ID</th><th class="ov">是否在线</th><th>备注</th><th class="so">注册时间<span class="sort"></span></th><th class="so">最后登陆时间<span class="sort"></span></th></tr></thead><tbody><tr class="odd"><td><span class="cb"></span></td><td>4</td><td><svg class="av" width="27.7" height="27.7" viewBox="0 0 28 28" style="margin-left:-1.5px;position:relative;top:-1.1px"><defs><clipPath id="c1"><circle cx="14" cy="14" r="14"/></clipPath></defs><circle cx="14" cy="14" r="14" fill="#4a86e8"/><g clip-path="url(#c1)"><g transform="translate(-.3,-1.6)"><path d="M3 32c0-8 5-10.500 11-10.500s11 2.500 11 10.500z" fill="#5a4fc0"/><path d="M11.300 18h5.400v4.200c0 1.200-1.200 2.300-2.700 2.300s-2.700-1.100-2.700-2.300z" fill="#f3e3d3"/><ellipse cx="14" cy="13.500" rx="4.600" ry="5.600" fill="#fbeee0"/><path d="M9 12.500c-.6-4.500 2-7.300 5.200-7.300 3.400 0 5.600 2.800 4.800 7.300-.5-2-1.300-3.200-2.200-3.800-1.800.9-4.300 1-5.800.600-.9.600-1.600 1.700-2 3.200z" fill="#f7d95a"/></g></g></svg></td><td>z6666</td><td>ss</td><td><span class="label l-pri">未提交</span></td><td>9895.00</td><td>0</td><td>0.00</td><td>100</td><td></td><td><span class="label l-blue">离线</span></td><td><span class="empty">Empty</span></td><td>2024-11-26 10:48:26</td><td>2025-04-17 23:19:13</td></tr><tr class="even"><td><span class="cb"></span></td><td>3</td><td><svg class="av" width="26.4" height="29.5" viewBox="0 0 28 30" preserveAspectRatio="none" style="margin-left:-1.5px;position:relative;top:.4px"><defs><clipPath id="c2"><ellipse cx="14" cy="15" rx="14" ry="15"/></clipPath></defs><ellipse cx="14" cy="15" rx="14" ry="15" fill="#f47920"/><g clip-path="url(#c2)"><path d="M2.500 32c0-6.500 5-9.500 11.500-9.500s11.500 3 11.500 9.500z" fill="#1d1a1a"/><path d="M11.200 19h5.600v4.300c0 1.300-1.300 2.200-2.800 2.200s-2.800-.9-2.800-2.200z" fill="#7a4a36"/><ellipse cx="14" cy="14.300" rx="4.800" ry="6" fill="#8a5640"/><path d="M8.900 13.500c-.7-4.800 1.800-7.800 5.100-7.800s5.800 3 5.100 7.800c-.4-2.300-1-3.500-1.800-4.300-2 .5-4.600.5-6.600 0-.8.800-1.400 2-1.800 4.300z" fill="#2a1d1a"/></g></svg></td><td>Z123</td><td>Oooo</td><td><span class="label l-pri">未提交</span></td><td>0.00</td><td>0</td><td>0.00</td><td>100</td><td>-</td><td><span class="label l-blue">离线</span></td><td><span class="empty">Empty</span></td><td>2024-11-21 15:25:18</td><td>2024-11-21 15:25:18</td></tr><tr class="odd"><td><span class="cb"></span></td><td>2</td><td><svg class="av" width="26.4" height="29.5" viewBox="0 0 28 30" preserveAspectRatio="none" style="margin-left:-1.5px;position:relative;top:.4px"><defs><clipPath id="c3"><ellipse cx="14" cy="15" rx="14" ry="15"/></clipPath></defs><ellipse cx="14" cy="15" rx="14" ry="15" fill="#f47920"/><g clip-path="url(#c3)"><path d="M2.500 32c0-6.500 5-9.500 11.500-9.500s11.500 3 11.500 9.500z" fill="#1d1a1a"/><path d="M11.200 19h5.600v4.300c0 1.300-1.300 2.200-2.800 2.200s-2.800-.9-2.800-2.200z" fill="#7a4a36"/><ellipse cx="14" cy="14.300" rx="4.800" ry="6" fill="#8a5640"/><path d="M8.900 13.500c-.7-4.800 1.800-7.800 5.100-7.800s5.800 3 5.100 7.800c-.4-2.300-1-3.500-1.800-4.300-2 .5-4.600.5-6.600 0-.8.800-1.400 2-1.800 4.300z" fill="#2a1d1a"/></g></svg></td><td>Zxc123</td><td>Did</td><td><span class="label l-pri">未提交</span></td><td>96000.00</td><td>0</td><td>0.00</td><td>100</td><td></td><td><span class="label l-blue">离线</span></td><td><span class="empty">Empty</span></td><td>2024-11-21 14:41:44</td><td>2024-11-21 14:48:01</td></tr><tr class="even"><td><span class="cb"></span></td><td>1</td><td><svg class="lg" width="31" height="31" viewBox="0 0 45 45" style="display:inline-block;vertical-align:middle">
<defs><linearGradient id="gta" x1="0" y1="0" x2="1" y2="1"><stop offset="0" stop-color="#6e4c12"/><stop offset=".35" stop-color="#b98a1e"/><stop offset=".6" stop-color="#e9cf6a"/><stop offset="1" stop-color="#a87812"/></linearGradient>
<linearGradient id="gtb" x1="0" y1="0" x2="0" y2="1"><stop offset="0" stop-color="#f0d676"/><stop offset=".3" stop-color="#c99a2a"/><stop offset=".7" stop-color="#8f6614"/><stop offset="1" stop-color="#caa23a"/></linearGradient></defs>
<path d="M27.6 2.9C17 1.500 8.700 9 8.700 18.300c0 7.200 5.800 11.600 13.100 11.600 6.200 0 11.200-1.900 13.400-4l-2.900-7c-1.300 2.600-5.300 4-9.800 4-5 0-8.300-2.900-8.300-7.400 0-6 5.300-11 13.400-12.600z" fill="url(#gta)"/>
<path d="M18.300 11.900h10.500c.5 3.100 1.700 5.600 3.500 7H15.400c1.600-1.400 2.600-3.900 2.900-7z" fill="url(#gtb)"/>
<text x="22.500" y="37.800" text-anchor="middle" font-family="'Liberation Sans','Noto Sans CJK SC',sans-serif" font-weight="bold" font-size="5.700" fill="#c9a42c">中国黄金</text>
<text x="22.500" y="41.900" text-anchor="middle" font-family="'Liberation Sans',sans-serif" font-size="3.200" fill="#d6b95a">China Gold</text></svg></td><td>13966668888</td><td>张学友</td><td><span class="label l-suc">已认证</span></td><td>999489.00</td><td>0</td><td>0.00</td><td>100</td><td>-</td><td><span class="label l-blue">离线</span></td><td><span class="empty">Empty</span></td><td>-</td><td>2024-11-21 17:49:27</td></tr></tbody></table></div><div class="fixed" style="left:1087.50px;top:159.43px;width:557px;height:292.3px;border-bottom:1px solid #f0f0f0;border-right:1px solid #f3f3f3"><table style="width:557px"><thead><tr><th style="border-left:0">操作</th></tr></thead><tbody><tr class="odd"><td style="border-left:0"><span class="xs b-g" style="left:8.5px;width:48.8px"><svg class="fa" width="11.00" height="11" viewBox="0 -1536 1792 1792"><path fill="#fff" transform="scale(1,-1)" d="M256 224v-192q0 -13 -9.5 -22.5t-22.5 -9.5h-192q-13 0 -22.5 9.5t-9.5 22.5v192q0 13 9.5 22.5t22.5 9.5h192q13 0 22.5 -9.5t9.5 -22.5zM256 608v-192q0 -13 -9.5 -22.5t-22.5 -9.5h-192q-13 0 -22.5 9.5t-9.5 22.5v192q0 13 9.5 22.5t22.5 9.5h192q13 0 22.5 -9.5
t9.5 -22.5zM256 992v-192q0 -13 -9.5 -22.5t-22.5 -9.5h-192q-13 0 -22.5 9.5t-9.5 22.5v192q0 13 9.5 22.5t22.5 9.5h192q13 0 22.5 -9.5t9.5 -22.5zM1792 224v-192q0 -13 -9.5 -22.5t-22.5 -9.5h-1344q-13 0 -22.5 9.5t-9.5 22.5v192q0 13 9.5 22.5t22.5 9.5h1344
q13 0 22.5 -9.5t9.5 -22.5zM256 1376v-192q0 -13 -9.5 -22.5t-22.5 -9.5h-192q-13 0 -22.5 9.5t-9.5 22.5v192q0 13 9.5 22.5t22.5 9.5h192q13 0 22.5 -9.5t9.5 -22.5zM1792 608v-192q0 -13 -9.5 -22.5t-22.5 -9.5h-1344q-13 0 -22.5 9.5t-9.5 22.5v192q0 13 9.5 22.5
t22.5 9.5h1344q13 0 22.5 -9.5t9.5 -22.5zM1792 992v-192q0 -13 -9.5 -22.5t-22.5 -9.5h-1344q-13 0 -22.5 9.5t-9.5 22.5v192q0 13 9.5 22.5t22.5 9.5h1344q13 0 22.5 -9.5t9.5 -22.5zM1792 1376v-192q0 -13 -9.5 -22.5t-22.5 -9.5h-1344q-13 0 -22.5 9.5t-9.5 22.5v192
q0 13 9.5 22.5t22.5 9.5h1344q13 0 22.5 -9.5t9.5 -22.5z"/></svg>详情</span><span class="xs b-o" style="left:60.6px;width:46.7px"><svg class="fa" width="10.21" height="11" viewBox="0 -1536 1664 1792"><path fill="#fff" transform="scale(1,-1)" d="M640 0q0 -52 -38 -90t-90 -38t-90 38t-38 90t38 90t90 38t90 -38t38 -90zM1536 0q0 -52 -38 -90t-90 -38t-90 38t-38 90t38 90t90 38t90 -38t38 -90zM1664 1088v-512q0 -24 -16.5 -42.5t-40.5 -21.5l-1044 -122q13 -60 13 -70q0 -16 -24 -64h920q26 0 45 -19t19 -45
t-19 -45t-45 -19h-1024q-26 0 -45 19t-19 45q0 11 8 31.5t16 36t21.5 40t15.5 29.5l-177 823h-204q-26 0 -45 19t-19 45t19 45t45 19h256q16 0 28.5 -6.5t19.5 -15.5t13 -24.5t8 -26t5.5 -29.5t4.5 -26h1201q26 0 45 -19t19 -45z"/></svg>分数</span><span class="xs b-b" style="left:111.8px;width:68.4px"><svg class="fa" width="10.21" height="11" viewBox="0 -1536 1664 1792"><path fill="#fff" transform="scale(1,-1)" d="M640 0q0 -52 -38 -90t-90 -38t-90 38t-38 90t38 90t90 38t90 -38t38 -90zM1536 0q0 -52 -38 -90t-90 -38t-90 38t-38 90t38 90t90 38t90 -38t38 -90zM1664 1088v-512q0 -24 -16.5 -42.5t-40.5 -21.5l-1044 -122q13 -60 13 -70q0 -16 -24 -64h920q26 0 45 -19t19 -45
t-19 -45t-45 -19h-1024q-26 0 -45 19t-19 45q0 11 8 31.5t16 36t21.5 40t15.5 29.5l-177 823h-204q-26 0 -45 19t-19 45t19 45t45 19h256q16 0 28.5 -6.5t19.5 -15.5t13 -24.5t8 -26t5.5 -29.5t4.5 -26h1201q26 0 45 -19t19 -45z"/></svg>实名认证</span><span class="xs b-o" style="left:184.6px;width:68.7px"><svg class="fa" width="10.21" height="11" viewBox="0 -1536 1664 1792"><path fill="#fff" transform="scale(1,-1)" d="M640 0q0 -52 -38 -90t-90 -38t-90 38t-38 90t38 90t90 38t90 -38t38 -90zM1536 0q0 -52 -38 -90t-90 -38t-90 38t-38 90t38 90t90 38t90 -38t38 -90zM1664 1088v-512q0 -24 -16.5 -42.5t-40.5 -21.5l-1044 -122q13 -60 13 -70q0 -16 -24 -64h920q26 0 45 -19t19 -45
t-19 -45t-45 -19h-1024q-26 0 -45 19t-19 45q0 11 8 31.5t16 36t21.5 40t15.5 29.5l-177 823h-204q-26 0 -45 19t-19 45t19 45t45 19h256q16 0 28.5 -6.5t19.5 -15.5t13 -24.5t8 -26t5.5 -29.5t4.5 -26h1201q26 0 45 -19t19 -45z"/></svg>冻结资金</span><span class="xs b-o" style="left:257.7px;width:57.6px"><svg class="fa" width="10.21" height="11" viewBox="0 -1536 1664 1792"><path fill="#fff" transform="scale(1,-1)" d="M640 0q0 -52 -38 -90t-90 -38t-90 38t-38 90t38 90t90 38t90 -38t38 -90zM1536 0q0 -52 -38 -90t-90 -38t-90 38t-38 90t38 90t90 38t90 -38t38 -90zM1664 1088v-512q0 -24 -16.5 -42.5t-40.5 -21.5l-1044 -122q13 -60 13 -70q0 -16 -24 -64h920q26 0 45 -19t19 -45
t-19 -45t-45 -19h-1024q-26 0 -45 19t-19 45q0 11 8 31.5t16 36t21.5 40t15.5 29.5l-177 823h-204q-26 0 -45 19t-19 45t19 45t45 19h256q16 0 28.5 -6.5t19.5 -15.5t13 -24.5t8 -26t5.5 -29.5t4.5 -26h1201q26 0 45 -19t19 -45z"/></svg>信誉分</span><span class="xs b-b" style="left:319.7px;width:48.4px"><svg class="fa" width="12.57" height="11" viewBox="0 -1536 2048 1792"><path fill="#fff" transform="scale(1,-1)" d="M2048 0v-128h-2048v1536h128v-1408h1920zM1664 1024l256 -896h-1664v576l448 576l576 -576z"/></svg>报表</span><span class="xs b-r" style="left:372.9px;width:77.2px"><svg class="fa" width="7.86" height="11" viewBox="0 -1536 1280 1792"><path fill="#fff" transform="scale(1,-1)" d="M1280 137q0 -109 -62.5 -187t-150.5 -78h-854q-88 0 -150.5 78t-62.5 187q0 85 8.5 160.5t31.5 152t58.5 131t94 89t134.5 34.5q131 -128 313 -128t313 128q76 0 134.5 -34.5t94 -89t58.5 -131t31.5 -152t8.5 -160.5zM1024 1024q0 -159 -112.5 -271.5t-271.5 -112.5
t-271.5 112.5t-112.5 271.5t112.5 271.5t271.5 112.5t271.5 -112.5t112.5 -271.5z"/></svg>设置黑名单</span><span class="xs b-r" style="left:454.5px;width:43.7px"><svg class="fa" width="7.86" height="11" viewBox="0 -1536 1280 1792"><path fill="#fff" transform="scale(1,-1)" d="M1280 137q0 -109 -62.5 -187t-150.5 -78h-854q-88 0 -150.5 78t-62.5 187q0 85 8.5 160.5t31.5 152t58.5 131t94 89t134.5 34.5q131 -128 313 -128t313 128q76 0 134.5 -34.5t94 -89t58.5 -131t31.5 -152t8.5 -160.5zM1024 1024q0 -159 -112.5 -271.5t-271.5 -112.5
t-271.5 112.5t-112.5 271.5t112.5 271.5t271.5 112.5t271.5 -112.5t112.5 -271.5z"/></svg>冻结</span><span class="xs io b-g" style="left:502.6px;width:21.7px"><svg class="fa" width="9.43" height="11" viewBox="0 -1536 1536 1792"><path fill="#fff" transform="scale(1,-1)" d="M363 0l91 91l-235 235l-91 -91v-107h128v-128h107zM886 928q0 22 -22 22q-10 0 -17 -7l-542 -542q-7 -7 -7 -17q0 -22 22 -22q10 0 17 7l542 542q7 7 7 17zM832 1120l416 -416l-832 -832h-416v416zM1515 1024q0 -53 -37 -90l-166 -166l-416 416l166 165q36 38 90 38
q53 0 91 -38l235 -234q37 -39 37 -91z"/></svg></span><span class="xs io b-r" style="left:527.6px;width:21.0px"><svg class="fa" width="8.64" height="11" viewBox="0 -1536 1408 1792"><path fill="#fff" transform="scale(1,-1)" d="M512 160v704q0 14 -9 23t-23 9h-64q-14 0 -23 -9t-9 -23v-704q0 -14 9 -23t23 -9h64q14 0 23 9t9 23zM768 160v704q0 14 -9 23t-23 9h-64q-14 0 -23 -9t-9 -23v-704q0 -14 9 -23t23 -9h64q14 0 23 9t9 23zM1024 160v704q0 14 -9 23t-23 9h-64q-14 0 -23 -9t-9 -23v-704
q0 -14 9 -23t23 -9h64q14 0 23 9t9 23zM480 1152h448l-48 117q-7 9 -17 11h-317q-10 -2 -17 -11zM1408 1120v-64q0 -14 -9 -23t-23 -9h-96v-948q0 -83 -47 -143.5t-113 -60.5h-832q-66 0 -113 58.5t-47 141.5v952h-96q-14 0 -23 9t-9 23v64q0 14 9 23t23 9h309l70 167
q15 37 54 63t79 26h320q40 0 79 -26t54 -63l70 -167h309q14 0 23 -9t9 -23z"/></svg></span></td></tr><tr class="even"><td style="border-left:0"><span class="xs b-g" style="left:8.5px;width:48.8px"><svg class="fa" width="11.00" height="11" viewBox="0 -1536 1792 1792"><path fill="#fff" transform="scale(1,-1)" d="M256 224v-192q0 -13 -9.5 -22.5t-22.5 -9.5h-192q-13 0 -22.5 9.5t-9.5 22.5v192q0 13 9.5 22.5t22.5 9.5h192q13 0 22.5 -9.5t9.5 -22.5zM256 608v-192q0 -13 -9.5 -22.5t-22.5 -9.5h-192q-13 0 -22.5 9.5t-9.5 22.5v192q0 13 9.5 22.5t22.5 9.5h192q13 0 22.5 -9.5
t9.5 -22.5zM256 992v-192q0 -13 -9.5 -22.5t-22.5 -9.5h-192q-13 0 -22.5 9.5t-9.5 22.5v192q0 13 9.5 22.5t22.5 9.5h192q13 0 22.5 -9.5t9.5 -22.5zM1792 224v-192q0 -13 -9.5 -22.5t-22.5 -9.5h-1344q-13 0 -22.5 9.5t-9.5 22.5v192q0 13 9.5 22.5t22.5 9.5h1344
q13 0 22.5 -9.5t9.5 -22.5zM256 1376v-192q0 -13 -9.5 -22.5t-22.5 -9.5h-192q-13 0 -22.5 9.5t-9.5 22.5v192q0 13 9.5 22.5t22.5 9.5h192q13 0 22.5 -9.5t9.5 -22.5zM1792 608v-192q0 -13 -9.5 -22.5t-22.5 -9.5h-1344q-13 0 -22.5 9.5t-9.5 22.5v192q0 13 9.5 22.5
t22.5 9.5h1344q13 0 22.5 -9.5t9.5 -22.5zM1792 992v-192q0 -13 -9.5 -22.5t-22.5 -9.5h-1344q-13 0 -22.5 9.5t-9.5 22.5v192q0 13 9.5 22.5t22.5 9.5h1344q13 0 22.5 -9.5t9.5 -22.5zM1792 1376v-192q0 -13 -9.5 -22.5t-22.5 -9.5h-1344q-13 0 -22.5 9.5t-9.5 22.5v192
q0 13 9.5 22.5t22.5 9.5h1344q13 0 22.5 -9.5t9.5 -22.5z"/></svg>详情</span><span class="xs b-o" style="left:60.6px;width:46.7px"><svg class="fa" width="10.21" height="11" viewBox="0 -1536 1664 1792"><path fill="#fff" transform="scale(1,-1)" d="M640 0q0 -52 -38 -90t-90 -38t-90 38t-38 90t38 90t90 38t90 -38t38 -90zM1536 0q0 -52 -38 -90t-90 -38t-90 38t-38 90t38 90t90 38t90 -38t38 -90zM1664 1088v-512q0 -24 -16.5 -42.5t-40.5 -21.5l-1044 -122q13 -60 13 -70q0 -16 -24 -64h920q26 0 45 -19t19 -45
t-19 -45t-45 -19h-1024q-26 0 -45 19t-19 45q0 11 8 31.5t16 36t21.5 40t15.5 29.5l-177 823h-204q-26 0 -45 19t-19 45t19 45t45 19h256q16 0 28.5 -6.5t19.5 -15.5t13 -24.5t8 -26t5.5 -29.5t4.5 -26h1201q26 0 45 -19t19 -45z"/></svg>分数</span><span class="xs b-b" style="left:111.8px;width:68.4px"><svg class="fa" width="10.21" height="11" viewBox="0 -1536 1664 1792"><path fill="#fff" transform="scale(1,-1)" d="M640 0q0 -52 -38 -90t-90 -38t-90 38t-38 90t38 90t90 38t90 -38t38 -90zM1536 0q0 -52 -38 -90t-90 -38t-90 38t-38 90t38 90t90 38t90 -38t38 -90zM1664 1088v-512q0 -24 -16.5 -42.5t-40.5 -21.5l-1044 -122q13 -60 13 -70q0 -16 -24 -64h920q26 0 45 -19t19 -45
t-19 -45t-45 -19h-1024q-26 0 -45 19t-19 45q0 11 8 31.5t16 36t21.5 40t15.5 29.5l-177 823h-204q-26 0 -45 19t-19 45t19 45t45 19h256q16 0 28.5 -6.5t19.5 -15.5t13 -24.5t8 -26t5.5 -29.5t4.5 -26h1201q26 0 45 -19t19 -45z"/></svg>实名认证</span><span class="xs b-o" style="left:184.6px;width:68.7px"><svg class="fa" width="10.21" height="11" viewBox="0 -1536 1664 1792"><path fill="#fff" transform="scale(1,-1)" d="M640 0q0 -52 -38 -90t-90 -38t-90 38t-38 90t38 90t90 38t90 -38t38 -90zM1536 0q0 -52 -38 -90t-90 -38t-90 38t-38 90t38 90t90 38t90 -38t38 -90zM1664 1088v-512q0 -24 -16.5 -42.5t-40.5 -21.5l-1044 -122q13 -60 13 -70q0 -16 -24 -64h920q26 0 45 -19t19 -45
t-19 -45t-45 -19h-1024q-26 0 -45 19t-19 45q0 11 8 31.5t16 36t21.5 40t15.5 29.5l-177 823h-204q-26 0 -45 19t-19 45t19 45t45 19h256q16 0 28.5 -6.5t19.5 -15.5t13 -24.5t8 -26t5.5 -29.5t4.5 -26h1201q26 0 45 -19t19 -45z"/></svg>冻结资金</span><span class="xs b-o" style="left:257.7px;width:57.6px"><svg class="fa" width="10.21" height="11" viewBox="0 -1536 1664 1792"><path fill="#fff" transform="scale(1,-1)" d="M640 0q0 -52 -38 -90t-90 -38t-90 38t-38 90t38 90t90 38t90 -38t38 -90zM1536 0q0 -52 -38 -90t-90 -38t-90 38t-38 90t38 90t90 38t90 -38t38 -90zM1664 1088v-512q0 -24 -16.5 -42.5t-40.5 -21.5l-1044 -122q13 -60 13 -70q0 -16 -24 -64h920q26 0 45 -19t19 -45
t-19 -45t-45 -19h-1024q-26 0 -45 19t-19 45q0 11 8 31.5t16 36t21.5 40t15.5 29.5l-177 823h-204q-26 0 -45 19t-19 45t19 45t45 19h256q16 0 28.5 -6.5t19.5 -15.5t13 -24.5t8 -26t5.5 -29.5t4.5 -26h1201q26 0 45 -19t19 -45z"/></svg>信誉分</span><span class="xs b-b" style="left:319.7px;width:48.4px"><svg class="fa" width="12.57" height="11" viewBox="0 -1536 2048 1792"><path fill="#fff" transform="scale(1,-1)" d="M2048 0v-128h-2048v1536h128v-1408h1920zM1664 1024l256 -896h-1664v576l448 576l576 -576z"/></svg>报表</span><span class="xs b-r" style="left:372.9px;width:77.2px"><svg class="fa" width="7.86" height="11" viewBox="0 -1536 1280 1792"><path fill="#fff" transform="scale(1,-1)" d="M1280 137q0 -109 -62.5 -187t-150.5 -78h-854q-88 0 -150.5 78t-62.5 187q0 85 8.5 160.5t31.5 152t58.5 131t94 89t134.5 34.5q131 -128 313 -128t313 128q76 0 134.5 -34.5t94 -89t58.5 -131t31.5 -152t8.5 -160.5zM1024 1024q0 -159 -112.5 -271.5t-271.5 -112.5
t-271.5 112.5t-112.5 271.5t112.5 271.5t271.5 112.5t271.5 -112.5t112.5 -271.5z"/></svg>设置黑名单</span><span class="xs b-r" style="left:454.5px;width:43.7px"><svg class="fa" width="7.86" height="11" viewBox="0 -1536 1280 1792"><path fill="#fff" transform="scale(1,-1)" d="M1280 137q0 -109 -62.5 -187t-150.5 -78h-854q-88 0 -150.5 78t-62.5 187q0 85 8.5 160.5t31.5 152t58.5 131t94 89t134.5 34.5q131 -128 313 -128t313 128q76 0 134.5 -34.5t94 -89t58.5 -131t31.5 -152t8.5 -160.5zM1024 1024q0 -159 -112.5 -271.5t-271.5 -112.5
t-271.5 112.5t-112.5 271.5t112.5 271.5t271.5 112.5t271.5 -112.5t112.5 -271.5z"/></svg>冻结</span><span class="xs io b-g" style="left:502.6px;width:21.7px"><svg class="fa" width="9.43" height="11" viewBox="0 -1536 1536 1792"><path fill="#fff" transform="scale(1,-1)" d="M363 0l91 91l-235 235l-91 -91v-107h128v-128h107zM886 928q0 22 -22 22q-10 0 -17 -7l-542 -542q-7 -7 -7 -17q0 -22 22 -22q10 0 17 7l542 542q7 7 7 17zM832 1120l416 -416l-832 -832h-416v416zM1515 1024q0 -53 -37 -90l-166 -166l-416 416l166 165q36 38 90 38
q53 0 91 -38l235 -234q37 -39 37 -91z"/></svg></span><span class="xs io b-r" style="left:527.6px;width:21.0px"><svg class="fa" width="8.64" height="11" viewBox="0 -1536 1408 1792"><path fill="#fff" transform="scale(1,-1)" d="M512 160v704q0 14 -9 23t-23 9h-64q-14 0 -23 -9t-9 -23v-704q0 -14 9 -23t23 -9h64q14 0 23 9t9 23zM768 160v704q0 14 -9 23t-23 9h-64q-14 0 -23 -9t-9 -23v-704q0 -14 9 -23t23 -9h64q14 0 23 9t9 23zM1024 160v704q0 14 -9 23t-23 9h-64q-14 0 -23 -9t-9 -23v-704
q0 -14 9 -23t23 -9h64q14 0 23 9t9 23zM480 1152h448l-48 117q-7 9 -17 11h-317q-10 -2 -17 -11zM1408 1120v-64q0 -14 -9 -23t-23 -9h-96v-948q0 -83 -47 -143.5t-113 -60.5h-832q-66 0 -113 58.5t-47 141.5v952h-96q-14 0 -23 9t-9 23v64q0 14 9 23t23 9h309l70 167
q15 37 54 63t79 26h320q40 0 79 -26t54 -63l70 -167h309q14 0 23 -9t9 -23z"/></svg></span></td></tr><tr class="odd"><td style="border-left:0"><span class="xs b-g" style="left:8.5px;width:48.8px"><svg class="fa" width="11.00" height="11" viewBox="0 -1536 1792 1792"><path fill="#fff" transform="scale(1,-1)" d="M256 224v-192q0 -13 -9.5 -22.5t-22.5 -9.5h-192q-13 0 -22.5 9.5t-9.5 22.5v192q0 13 9.5 22.5t22.5 9.5h192q13 0 22.5 -9.5t9.5 -22.5zM256 608v-192q0 -13 -9.5 -22.5t-22.5 -9.5h-192q-13 0 -22.5 9.5t-9.5 22.5v192q0 13 9.5 22.5t22.5 9.5h192q13 0 22.5 -9.5
t9.5 -22.5zM256 992v-192q0 -13 -9.5 -22.5t-22.5 -9.5h-192q-13 0 -22.5 9.5t-9.5 22.5v192q0 13 9.5 22.5t22.5 9.5h192q13 0 22.5 -9.5t9.5 -22.5zM1792 224v-192q0 -13 -9.5 -22.5t-22.5 -9.5h-1344q-13 0 -22.5 9.5t-9.5 22.5v192q0 13 9.5 22.5t22.5 9.5h1344
q13 0 22.5 -9.5t9.5 -22.5zM256 1376v-192q0 -13 -9.5 -22.5t-22.5 -9.5h-192q-13 0 -22.5 9.5t-9.5 22.5v192q0 13 9.5 22.5t22.5 9.5h192q13 0 22.5 -9.5t9.5 -22.5zM1792 608v-192q0 -13 -9.5 -22.5t-22.5 -9.5h-1344q-13 0 -22.5 9.5t-9.5 22.5v192q0 13 9.5 22.5
t22.5 9.5h1344q13 0 22.5 -9.5t9.5 -22.5zM1792 992v-192q0 -13 -9.5 -22.5t-22.5 -9.5h-1344q-13 0 -22.5 9.5t-9.5 22.5v192q0 13 9.5 22.5t22.5 9.5h1344q13 0 22.5 -9.5t9.5 -22.5zM1792 1376v-192q0 -13 -9.5 -22.5t-22.5 -9.5h-1344q-13 0 -22.5 9.5t-9.5 22.5v192
q0 13 9.5 22.5t22.5 9.5h1344q13 0 22.5 -9.5t9.5 -22.5z"/></svg>详情</span><span class="xs b-o" style="left:60.6px;width:46.7px"><svg class="fa" width="10.21" height="11" viewBox="0 -1536 1664 1792"><path fill="#fff" transform="scale(1,-1)" d="M640 0q0 -52 -38 -90t-90 -38t-90 38t-38 90t38 90t90 38t90 -38t38 -90zM1536 0q0 -52 -38 -90t-90 -38t-90 38t-38 90t38 90t90 38t90 -38t38 -90zM1664 1088v-512q0 -24 -16.5 -42.5t-40.5 -21.5l-1044 -122q13 -60 13 -70q0 -16 -24 -64h920q26 0 45 -19t19 -45
t-19 -45t-45 -19h-1024q-26 0 -45 19t-19 45q0 11 8 31.5t16 36t21.5 40t15.5 29.5l-177 823h-204q-26 0 -45 19t-19 45t19 45t45 19h256q16 0 28.5 -6.5t19.5 -15.5t13 -24.5t8 -26t5.5 -29.5t4.5 -26h1201q26 0 45 -19t19 -45z"/></svg>分数</span><span class="xs b-b" style="left:111.8px;width:68.4px"><svg class="fa" width="10.21" height="11" viewBox="0 -1536 1664 1792"><path fill="#fff" transform="scale(1,-1)" d="M640 0q0 -52 -38 -90t-90 -38t-90 38t-38 90t38 90t90 38t90 -38t38 -90zM1536 0q0 -52 -38 -90t-90 -38t-90 38t-38 90t38 90t90 38t90 -38t38 -90zM1664 1088v-512q0 -24 -16.5 -42.5t-40.5 -21.5l-1044 -122q13 -60 13 -70q0 -16 -24 -64h920q26 0 45 -19t19 -45
t-19 -45t-45 -19h-1024q-26 0 -45 19t-19 45q0 11 8 31.5t16 36t21.5 40t15.5 29.5l-177 823h-204q-26 0 -45 19t-19 45t19 45t45 19h256q16 0 28.5 -6.5t19.5 -15.5t13 -24.5t8 -26t5.5 -29.5t4.5 -26h1201q26 0 45 -19t19 -45z"/></svg>实名认证</span><span class="xs b-o" style="left:184.6px;width:68.7px"><svg class="fa" width="10.21" height="11" viewBox="0 -1536 1664 1792"><path fill="#fff" transform="scale(1,-1)" d="M640 0q0 -52 -38 -90t-90 -38t-90 38t-38 90t38 90t90 38t90 -38t38 -90zM1536 0q0 -52 -38 -90t-90 -38t-90 38t-38 90t38 90t90 38t90 -38t38 -90zM1664 1088v-512q0 -24 -16.5 -42.5t-40.5 -21.5l-1044 -122q13 -60 13 -70q0 -16 -24 -64h920q26 0 45 -19t19 -45
t-19 -45t-45 -19h-1024q-26 0 -45 19t-19 45q0 11 8 31.5t16 36t21.5 40t15.5 29.5l-177 823h-204q-26 0 -45 19t-19 45t19 45t45 19h256q16 0 28.5 -6.5t19.5 -15.5t13 -24.5t8 -26t5.5 -29.5t4.5 -26h1201q26 0 45 -19t19 -45z"/></svg>冻结资金</span><span class="xs b-o" style="left:257.7px;width:57.6px"><svg class="fa" width="10.21" height="11" viewBox="0 -1536 1664 1792"><path fill="#fff" transform="scale(1,-1)" d="M640 0q0 -52 -38 -90t-90 -38t-90 38t-38 90t38 90t90 38t90 -38t38 -90zM1536 0q0 -52 -38 -90t-90 -38t-90 38t-38 90t38 90t90 38t90 -38t38 -90zM1664 1088v-512q0 -24 -16.5 -42.5t-40.5 -21.5l-1044 -122q13 -60 13 -70q0 -16 -24 -64h920q26 0 45 -19t19 -45
t-19 -45t-45 -19h-1024q-26 0 -45 19t-19 45q0 11 8 31.5t16 36t21.5 40t15.5 29.5l-177 823h-204q-26 0 -45 19t-19 45t19 45t45 19h256q16 0 28.5 -6.5t19.5 -15.5t13 -24.5t8 -26t5.5 -29.5t4.5 -26h1201q26 0 45 -19t19 -45z"/></svg>信誉分</span><span class="xs b-b" style="left:319.7px;width:48.4px"><svg class="fa" width="12.57" height="11" viewBox="0 -1536 2048 1792"><path fill="#fff" transform="scale(1,-1)" d="M2048 0v-128h-2048v1536h128v-1408h1920zM1664 1024l256 -896h-1664v576l448 576l576 -576z"/></svg>报表</span><span class="xs b-r" style="left:372.9px;width:77.2px"><svg class="fa" width="7.86" height="11" viewBox="0 -1536 1280 1792"><path fill="#fff" transform="scale(1,-1)" d="M1280 137q0 -109 -62.5 -187t-150.5 -78h-854q-88 0 -150.5 78t-62.5 187q0 85 8.5 160.5t31.5 152t58.5 131t94 89t134.5 34.5q131 -128 313 -128t313 128q76 0 134.5 -34.5t94 -89t58.5 -131t31.5 -152t8.5 -160.5zM1024 1024q0 -159 -112.5 -271.5t-271.5 -112.5
t-271.5 112.5t-112.5 271.5t112.5 271.5t271.5 112.5t271.5 -112.5t112.5 -271.5z"/></svg>设置黑名单</span><span class="xs b-r" style="left:454.5px;width:43.7px"><svg class="fa" width="7.86" height="11" viewBox="0 -1536 1280 1792"><path fill="#fff" transform="scale(1,-1)" d="M1280 137q0 -109 -62.5 -187t-150.5 -78h-854q-88 0 -150.5 78t-62.5 187q0 85 8.5 160.5t31.5 152t58.5 131t94 89t134.5 34.5q131 -128 313 -128t313 128q76 0 134.5 -34.5t94 -89t58.5 -131t31.5 -152t8.5 -160.5zM1024 1024q0 -159 -112.5 -271.5t-271.5 -112.5
t-271.5 112.5t-112.5 271.5t112.5 271.5t271.5 112.5t271.5 -112.5t112.5 -271.5z"/></svg>冻结</span><span class="xs io b-g" style="left:502.6px;width:21.7px"><svg class="fa" width="9.43" height="11" viewBox="0 -1536 1536 1792"><path fill="#fff" transform="scale(1,-1)" d="M363 0l91 91l-235 235l-91 -91v-107h128v-128h107zM886 928q0 22 -22 22q-10 0 -17 -7l-542 -542q-7 -7 -7 -17q0 -22 22 -22q10 0 17 7l542 542q7 7 7 17zM832 1120l416 -416l-832 -832h-416v416zM1515 1024q0 -53 -37 -90l-166 -166l-416 416l166 165q36 38 90 38
q53 0 91 -38l235 -234q37 -39 37 -91z"/></svg></span><span class="xs io b-r" style="left:527.6px;width:21.0px"><svg class="fa" width="8.64" height="11" viewBox="0 -1536 1408 1792"><path fill="#fff" transform="scale(1,-1)" d="M512 160v704q0 14 -9 23t-23 9h-64q-14 0 -23 -9t-9 -23v-704q0 -14 9 -23t23 -9h64q14 0 23 9t9 23zM768 160v704q0 14 -9 23t-23 9h-64q-14 0 -23 -9t-9 -23v-704q0 -14 9 -23t23 -9h64q14 0 23 9t9 23zM1024 160v704q0 14 -9 23t-23 9h-64q-14 0 -23 -9t-9 -23v-704
q0 -14 9 -23t23 -9h64q14 0 23 9t9 23zM480 1152h448l-48 117q-7 9 -17 11h-317q-10 -2 -17 -11zM1408 1120v-64q0 -14 -9 -23t-23 -9h-96v-948q0 -83 -47 -143.5t-113 -60.5h-832q-66 0 -113 58.5t-47 141.5v952h-96q-14 0 -23 9t-9 23v64q0 14 9 23t23 9h309l70 167
q15 37 54 63t79 26h320q40 0 79 -26t54 -63l70 -167h309q14 0 23 -9t9 -23z"/></svg></span></td></tr><tr class="even"><td style="border-left:0"><span class="xs b-g" style="left:8.5px;width:48.8px"><svg class="fa" width="11.00" height="11" viewBox="0 -1536 1792 1792"><path fill="#fff" transform="scale(1,-1)" d="M256 224v-192q0 -13 -9.5 -22.5t-22.5 -9.5h-192q-13 0 -22.5 9.5t-9.5 22.5v192q0 13 9.5 22.5t22.5 9.5h192q13 0 22.5 -9.5t9.5 -22.5zM256 608v-192q0 -13 -9.5 -22.5t-22.5 -9.5h-192q-13 0 -22.5 9.5t-9.5 22.5v192q0 13 9.5 22.5t22.5 9.5h192q13 0 22.5 -9.5
t9.5 -22.5zM256 992v-192q0 -13 -9.5 -22.5t-22.5 -9.5h-192q-13 0 -22.5 9.5t-9.5 22.5v192q0 13 9.5 22.5t22.5 9.5h192q13 0 22.5 -9.5t9.5 -22.5zM1792 224v-192q0 -13 -9.5 -22.5t-22.5 -9.5h-1344q-13 0 -22.5 9.5t-9.5 22.5v192q0 13 9.5 22.5t22.5 9.5h1344
q13 0 22.5 -9.5t9.5 -22.5zM256 1376v-192q0 -13 -9.5 -22.5t-22.5 -9.5h-192q-13 0 -22.5 9.5t-9.5 22.5v192q0 13 9.5 22.5t22.5 9.5h192q13 0 22.5 -9.5t9.5 -22.5zM1792 608v-192q0 -13 -9.5 -22.5t-22.5 -9.5h-1344q-13 0 -22.5 9.5t-9.5 22.5v192q0 13 9.5 22.5
t22.5 9.5h1344q13 0 22.5 -9.5t9.5 -22.5zM1792 992v-192q0 -13 -9.5 -22.5t-22.5 -9.5h-1344q-13 0 -22.5 9.5t-9.5 22.5v192q0 13 9.5 22.5t22.5 9.5h1344q13 0 22.5 -9.5t9.5 -22.5zM1792 1376v-192q0 -13 -9.5 -22.5t-22.5 -9.5h-1344q-13 0 -22.5 9.5t-9.5 22.5v192
q0 13 9.5 22.5t22.5 9.5h1344q13 0 22.5 -9.5t9.5 -22.5z"/></svg>详情</span><span class="xs b-o" style="left:60.6px;width:46.7px"><svg class="fa" width="10.21" height="11" viewBox="0 -1536 1664 1792"><path fill="#fff" transform="scale(1,-1)" d="M640 0q0 -52 -38 -90t-90 -38t-90 38t-38 90t38 90t90 38t90 -38t38 -90zM1536 0q0 -52 -38 -90t-90 -38t-90 38t-38 90t38 90t90 38t90 -38t38 -90zM1664 1088v-512q0 -24 -16.5 -42.5t-40.5 -21.5l-1044 -122q13 -60 13 -70q0 -16 -24 -64h920q26 0 45 -19t19 -45
t-19 -45t-45 -19h-1024q-26 0 -45 19t-19 45q0 11 8 31.5t16 36t21.5 40t15.5 29.5l-177 823h-204q-26 0 -45 19t-19 45t19 45t45 19h256q16 0 28.5 -6.5t19.5 -15.5t13 -24.5t8 -26t5.5 -29.5t4.5 -26h1201q26 0 45 -19t19 -45z"/></svg>分数</span><span class="xs b-b" style="left:111.8px;width:68.4px"><svg class="fa" width="10.21" height="11" viewBox="0 -1536 1664 1792"><path fill="#fff" transform="scale(1,-1)" d="M640 0q0 -52 -38 -90t-90 -38t-90 38t-38 90t38 90t90 38t90 -38t38 -90zM1536 0q0 -52 -38 -90t-90 -38t-90 38t-38 90t38 90t90 38t90 -38t38 -90zM1664 1088v-512q0 -24 -16.5 -42.5t-40.5 -21.5l-1044 -122q13 -60 13 -70q0 -16 -24 -64h920q26 0 45 -19t19 -45
t-19 -45t-45 -19h-1024q-26 0 -45 19t-19 45q0 11 8 31.5t16 36t21.5 40t15.5 29.5l-177 823h-204q-26 0 -45 19t-19 45t19 45t45 19h256q16 0 28.5 -6.5t19.5 -15.5t13 -24.5t8 -26t5.5 -29.5t4.5 -26h1201q26 0 45 -19t19 -45z"/></svg>实名认证</span><span class="xs b-o" style="left:184.6px;width:68.7px"><svg class="fa" width="10.21" height="11" viewBox="0 -1536 1664 1792"><path fill="#fff" transform="scale(1,-1)" d="M640 0q0 -52 -38 -90t-90 -38t-90 38t-38 90t38 90t90 38t90 -38t38 -90zM1536 0q0 -52 -38 -90t-90 -38t-90 38t-38 90t38 90t90 38t90 -38t38 -90zM1664 1088v-512q0 -24 -16.5 -42.5t-40.5 -21.5l-1044 -122q13 -60 13 -70q0 -16 -24 -64h920q26 0 45 -19t19 -45
t-19 -45t-45 -19h-1024q-26 0 -45 19t-19 45q0 11 8 31.5t16 36t21.5 40t15.5 29.5l-177 823h-204q-26 0 -45 19t-19 45t19 45t45 19h256q16 0 28.5 -6.5t19.5 -15.5t13 -24.5t8 -26t5.5 -29.5t4.5 -26h1201q26 0 45 -19t19 -45z"/></svg>冻结资金</span><span class="xs b-o" style="left:257.7px;width:57.6px"><svg class="fa" width="10.21" height="11" viewBox="0 -1536 1664 1792"><path fill="#fff" transform="scale(1,-1)" d="M640 0q0 -52 -38 -90t-90 -38t-90 38t-38 90t38 90t90 38t90 -38t38 -90zM1536 0q0 -52 -38 -90t-90 -38t-90 38t-38 90t38 90t90 38t90 -38t38 -90zM1664 1088v-512q0 -24 -16.5 -42.5t-40.5 -21.5l-1044 -122q13 -60 13 -70q0 -16 -24 -64h920q26 0 45 -19t19 -45
t-19 -45t-45 -19h-1024q-26 0 -45 19t-19 45q0 11 8 31.5t16 36t21.5 40t15.5 29.5l-177 823h-204q-26 0 -45 19t-19 45t19 45t45 19h256q16 0 28.5 -6.5t19.5 -15.5t13 -24.5t8 -26t5.5 -29.5t4.5 -26h1201q26 0 45 -19t19 -45z"/></svg>信誉分</span><span class="xs b-b" style="left:319.7px;width:48.4px"><svg class="fa" width="12.57" height="11" viewBox="0 -1536 2048 1792"><path fill="#fff" transform="scale(1,-1)" d="M2048 0v-128h-2048v1536h128v-1408h1920zM1664 1024l256 -896h-1664v576l448 576l576 -576z"/></svg>报表</span><span class="xs b-r" style="left:372.9px;width:77.2px"><svg class="fa" width="7.86" height="11" viewBox="0 -1536 1280 1792"><path fill="#fff" transform="scale(1,-1)" d="M1280 137q0 -109 -62.5 -187t-150.5 -78h-854q-88 0 -150.5 78t-62.5 187q0 85 8.5 160.5t31.5 152t58.5 131t94 89t134.5 34.5q131 -128 313 -128t313 128q76 0 134.5 -34.5t94 -89t58.5 -131t31.5 -152t8.5 -160.5zM1024 1024q0 -159 -112.5 -271.5t-271.5 -112.5
t-271.5 112.5t-112.5 271.5t112.5 271.5t271.5 112.5t271.5 -112.5t112.5 -271.5z"/></svg>设置黑名单</span><span class="xs b-r" style="left:454.5px;width:43.7px"><svg class="fa" width="7.86" height="11" viewBox="0 -1536 1280 1792"><path fill="#fff" transform="scale(1,-1)" d="M1280 137q0 -109 -62.5 -187t-150.5 -78h-854q-88 0 -150.5 78t-62.5 187q0 85 8.5 160.5t31.5 152t58.5 131t94 89t134.5 34.5q131 -128 313 -128t313 128q76 0 134.5 -34.5t94 -89t58.5 -131t31.5 -152t8.5 -160.5zM1024 1024q0 -159 -112.5 -271.5t-271.5 -112.5
t-271.5 112.5t-112.5 271.5t112.5 271.5t271.5 112.5t271.5 -112.5t112.5 -271.5z"/></svg>冻结</span><span class="xs io b-g" style="left:502.6px;width:21.7px"><svg class="fa" width="9.43" height="11" viewBox="0 -1536 1536 1792"><path fill="#fff" transform="scale(1,-1)" d="M363 0l91 91l-235 235l-91 -91v-107h128v-128h107zM886 928q0 22 -22 22q-10 0 -17 -7l-542 -542q-7 -7 -7 -17q0 -22 22 -22q10 0 17 7l542 542q7 7 7 17zM832 1120l416 -416l-832 -832h-416v416zM1515 1024q0 -53 -37 -90l-166 -166l-416 416l166 165q36 38 90 38
q53 0 91 -38l235 -234q37 -39 37 -91z"/></svg></span><span class="xs io b-r" style="left:527.6px;width:21.0px"><svg class="fa" width="8.64" height="11" viewBox="0 -1536 1408 1792"><path fill="#fff" transform="scale(1,-1)" d="M512 160v704q0 14 -9 23t-23 9h-64q-14 0 -23 -9t-9 -23v-704q0 -14 9 -23t23 -9h64q14 0 23 9t9 23zM768 160v704q0 14 -9 23t-23 9h-64q-14 0 -23 -9t-9 -23v-704q0 -14 9 -23t23 -9h64q14 0 23 9t9 23zM1024 160v704q0 14 -9 23t-23 9h-64q-14 0 -23 -9t-9 -23v-704
q0 -14 9 -23t23 -9h64q14 0 23 9t9 23zM480 1152h448l-48 117q-7 9 -17 11h-317q-10 -2 -17 -11zM1408 1120v-64q0 -14 -9 -23t-23 -9h-96v-948q0 -83 -47 -143.5t-113 -60.5h-832q-66 0 -113 58.5t-47 141.5v952h-96q-14 0 -23 9t-9 23v64q0 14 9 23t23 9h309l70 167
q15 37 54 63t79 26h320q40 0 79 -26t54 -63l70 -167h309q14 0 23 -9t9 -23z"/></svg></span></td></tr></tbody></table></div><div class="sb" style="left:19.30px;top:454.43px;width:0;height:0;border-top:4.9px solid transparent;border-bottom:4.9px solid transparent;border-right:7.8px solid #8b8b8b"></div><div class="sb" style="left:32.50px;top:454.63px;width:1325.5px;height:9.3px;border-radius:5px;background:#8b8b8b"></div><div class="sb" style="left:1633.50px;top:454.43px;width:0;height:0;border-top:4.9px solid transparent;border-bottom:4.9px solid transparent;border-left:7.8px solid #8b8b8b"></div><div class="pinfo" style="left:15.00px;top:483.13px">显示第 1 到第 4 条记录，总共 4 条记录</div></div>
 </div>
</div>
<svg class="wm" width="220" height="100" viewBox="0 0 220 100" style="position:absolute;left:1680px;top:20px;z-index:9;overflow:visible">
<defs><radialGradient id="wy" gradientUnits="userSpaceOnUse" cx="-11.300" cy="-20.400" r="45"><stop offset="0" stop-color="#fff02a"/><stop offset=".22" stop-color="#fee11a"/><stop offset=".55" stop-color="#fccd0c"/><stop offset="1" stop-color="#f6a01e"/></radialGradient>
<linearGradient id="wr" gradientUnits="userSpaceOnUse" x1="-22" y1="-34" x2="-12" y2="4"><stop offset="0" stop-color="#fbb724"/><stop offset=".5" stop-color="#f58a22"/><stop offset=".85" stop-color="#ec5f28"/><stop offset="1" stop-color="#e6402a"/></linearGradient></defs>
<g transform="translate(39.7,50.0)"><path d="M-12 -36.64A29.9 40 0 0 1 29.83 2.7C28.76 1.95 26.07 -0.73 23.40 -1.80C20.73 -2.87 16.87 -3.52 13.80 -3.70C10.73 -3.88 7.80 -3.05 5.00 -2.90C2.20 -2.75 -0.50 -2.63 -3.00 -2.80C-5.50 -2.97 -8.08 -2.87 -10.00 -3.90C-11.92 -4.93 -13.38 -7.08 -14.50 -9.00C-15.62 -10.92 -16.33 -13.18 -16.70 -15.40C-17.07 -17.62 -17.02 -19.87 -16.70 -22.30C-16.38 -24.73 -15.58 -27.61 -14.80 -30.00C-14.02 -32.39 -12.47 -35.53 -12.00 -36.64Z" fill="url(#wy)"/><path d="M-13.4 -35.76A29.9 40 0 0 0 -29.83 -2.7C-28.76 -1.95 -26.07 0.73 -23.40 1.80C-20.73 2.87 -16.98 3.55 -13.80 3.70C-10.62 3.85 -5.88 2.87 -4.30 2.70C-5.37 2.43 -8.73 2.10 -10.70 1.10C-12.67 0.10 -14.62 -1.62 -16.10 -3.30C-17.58 -4.98 -18.73 -6.88 -19.60 -9.00C-20.47 -11.12 -21.10 -13.67 -21.30 -16.00C-21.50 -18.33 -21.25 -20.67 -20.80 -23.00C-20.35 -25.33 -19.83 -27.87 -18.60 -30.00C-17.37 -32.13 -14.27 -34.80 -13.40 -35.76Z" fill="url(#wr)"/><g transform="rotate(180)"><path d="M-12 -36.64A29.9 40 0 0 1 29.83 2.7C28.76 1.95 26.07 -0.73 23.40 -1.80C20.73 -2.87 16.87 -3.52 13.80 -3.70C10.73 -3.88 7.80 -3.05 5.00 -2.90C2.20 -2.75 -0.50 -2.63 -3.00 -2.80C-5.50 -2.97 -8.08 -2.87 -10.00 -3.90C-11.92 -4.93 -13.38 -7.08 -14.50 -9.00C-15.62 -10.92 -16.33 -13.18 -16.70 -15.40C-17.07 -17.62 -17.02 -19.87 -16.70 -22.30C-16.38 -24.73 -15.58 -27.61 -14.80 -30.00C-14.02 -32.39 -12.47 -35.53 -12.00 -36.64Z" fill="url(#wy)"/><path d="M-13.4 -35.76A29.9 40 0 0 0 -29.83 -2.7C-28.76 -1.95 -26.07 0.73 -23.40 1.80C-20.73 2.87 -16.98 3.55 -13.80 3.70C-10.62 3.85 -5.88 2.87 -4.30 2.70C-5.37 2.43 -8.73 2.10 -10.70 1.10C-12.67 0.10 -14.62 -1.62 -16.10 -3.30C-17.58 -4.98 -18.73 -6.88 -19.60 -9.00C-20.47 -11.12 -21.10 -13.67 -21.30 -16.00C-21.50 -18.33 -21.25 -20.67 -20.80 -23.00C-20.35 -25.33 -19.83 -27.87 -18.60 -30.00C-17.37 -32.13 -14.27 -34.80 -13.40 -35.76Z" fill="url(#wr)"/></g></g>
<text x="77.100" y="56.900" font-family="'Liberation Sans',sans-serif" font-size="54" fill="#ff6b1f" textLength="29.700" lengthAdjust="spacingAndGlyphs" stroke="#fff" stroke-width="0">K</text>
<path d="M119.500 19.300h3.700v37.600h-3.700zM119.500 19.300h-2.300v1l2.300 2.500z" fill="#ff6b1f"/>
<text x="131.500" y="59.900" font-family="'Noto Sans CJK SC','Liberation Sans',sans-serif" font-weight="700" font-size="52" fill="#0f8a0f" textLength="39" lengthAdjust="spacingAndGlyphs">源</text>
<text x="172" y="59.700" font-family="'Noto Sans CJK SC','Liberation Sans',sans-serif" font-weight="700" font-size="52" fill="#ff6b1f" textLength="40.500" lengthAdjust="spacingAndGlyphs">码</text>
<text x="77.500" y="85" font-family="'DejaVu Sans Mono','Liberation Mono',monospace" font-size="17" fill="#0a8a0a" letter-spacing="7.250">k1ym.com</text>
<path d="M131 27.400h9l1.500-9.100-3.500 3.700-2.300-9.400-2.400 9.400-4.700-3.700z" fill="#0f8a0f"/><circle cx="135.700" cy="12.600" r="1.100" fill="#0f8a0f"/>
</svg><div class="upl"><div class="upi"><svg width="37" height="38" viewBox="0 0 37 38"><g fill="none" stroke="#fff" stroke-width="2.800"><circle cx="19.300" cy="15.400" r="3.500"/><circle cx="13.800" cy="21.600" r="3.500"/><circle cx="24.400" cy="21.600" r="3.500"/></g><path d="M16.800 18.200l-1 1.200M17.300 21.600h3.600" stroke="#fff" stroke-width="2.800" fill="none"/></svg></div><span>拖拽至此上传</span></div>
</body></html>
